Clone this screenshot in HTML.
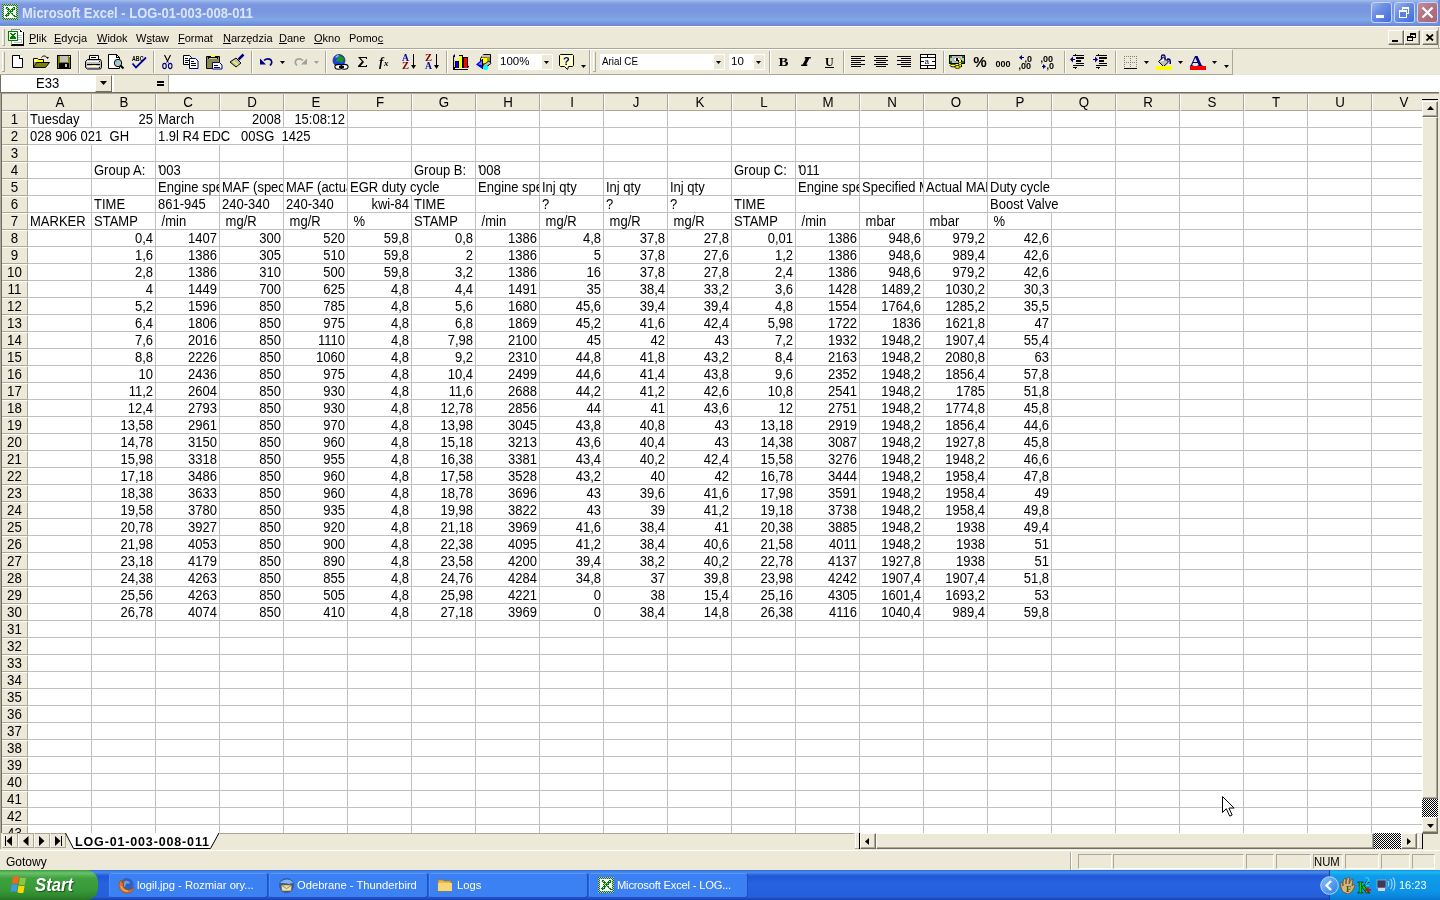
<!DOCTYPE html><html><head><meta charset="utf-8"><style>
*{box-sizing:border-box}
html,body{margin:0;padding:0}
body{width:1440px;height:900px;overflow:hidden;position:relative;background:#ECE9D8;will-change:transform;font-family:"Liberation Sans",sans-serif;color:#000}
.a{position:absolute}
.t{position:absolute;white-space:nowrap;font-size:13px;line-height:16px;transform:scaleY(1.13);transform-origin:0 12.5px}
.hd{position:absolute;font-size:13.33px;line-height:16px;text-align:center;white-space:nowrap}
.hd span{display:inline-block;transform:scaleY(1.1);transform-origin:0 12.5px}
</style></head><body>
<div class="a" style="left:0;top:0;width:1440px;height:26px;background:linear-gradient(to bottom,#9DB9EB 0px,#9DB9EB 1px,#8CA8E6 2px,#7A96DF 5px,#7A96DF 12px,#7EA0E3 17px,#80A6E6 20px,#7496DF 23px,#6D8AD8 25px,#6D8AD8 26px)"></div>
<div class="a" style="left:1438px;top:0;width:2px;height:26px;background:#6E88D6"></div>
<div class="a" style="left:0;top:26px;width:1440px;height:1px;background:#FFFFFF"></div>
<div class="a" style="left:22px;top:5px;font-size:14px;font-weight:bold;color:#DCE5F7;line-height:16px;white-space:nowrap;transform:scaleX(0.925);transform-origin:0 0">Microsoft Excel - LOG-01-003-008-011</div>
<svg class="a" style="left:2px;top:4px" width="16" height="16" viewBox="0 0 16 16" shape-rendering="crispEdges"><defs><pattern id="dith" width="2" height="2" patternUnits="userSpaceOnUse"><rect width="2" height="2" fill="#C8B8D0"/><rect width="1" height="1" fill="#008000"/><rect x="1" y="1" width="1" height="1" fill="#008000"/></pattern><pattern id="dith2" width="2" height="2" patternUnits="userSpaceOnUse"><rect width="2" height="2" fill="#008000"/><rect x="1" width="1" height="1" fill="#D0D0D0"/></pattern></defs><rect x="0" y="0" width="16" height="16" fill="url(#dith)"/><rect x="2" y="2" width="12" height="12" fill="#fff"/><path d="M3 4l2-1l3 3l3-3l3 1l-4 4.5l4 4.5h-3l-3-3l-3 3l-2-1l3-3.5z" fill="url(#dith2)"/><path d="M4 5l7.5 7.5" stroke="#fff" stroke-width="0.8" shape-rendering="geometricPrecision"/><rect x="13" y="12" width="2" height="1" fill="#008000"/></svg>
<div class="a" style="left:1371px;top:2px;width:21px;height:21px;border-radius:3px;border:1px solid #C8D6F4;background:linear-gradient(135deg,#A0B6E8 0%,#6F91E6 35%,#3F6DE0 100%)"><div class="a" style="left:4px;top:12px;width:8px;height:3px;background:#fff"></div></div>
<div class="a" style="left:1394px;top:2px;width:21px;height:21px;border-radius:3px;border:1px solid #C8D6F4;background:linear-gradient(135deg,#A0B6E8 0%,#6F91E6 35%,#3F6DE0 100%)"><div class="a" style="left:7px;top:4px;width:7px;height:7px;border:1px solid #fff;border-top-width:2px"></div><div class="a" style="left:4px;top:7px;width:8px;height:8px;border:1px solid #fff;border-top-width:2px;background:#5A82E3"></div></div>
<div class="a" style="left:1417px;top:2px;width:21px;height:21px;border-radius:3px;border:1px solid #C8D6F4;background:linear-gradient(135deg,#C48E9A 0%,#B27785 40%,#A86472 100%)"><svg class="a" style="left:3px;top:3px" width="13" height="13" viewBox="0 0 13 13"><path d="M1.5 1.5 L11.5 11.5 M11.5 1.5 L1.5 11.5" stroke="#fff" stroke-width="2.2"/></svg></div>
<div class="a" style="left:0;top:48px;width:1440px;height:1px;background:#ACA899"></div>
<div class="a" style="left:0;top:49px;width:1232px;height:1px;background:#FFFFFF"></div>
<div class="a" style="left:1438px;top:27px;width:1px;height:22px;background:#ACA899"></div>
<div class="a" style="left:2px;top:29px;width:3px;height:17px;border-left:1px solid #fff;border-right:1px solid #ACA899;border-bottom:1px solid #ACA899"></div>
<svg class="a" style="left:7px;top:29px" width="18" height="18" viewBox="0 0 18 18" shape-rendering="crispEdges"><rect x="4" y="0" width="13" height="17" fill="#000"/><rect x="4" y="0" width="12" height="15" fill="#fff"/><rect x="4" y="0" width="1" height="16" fill="#909090"/><rect x="4" y="0" width="9" height="1" fill="#909090"/><rect x="13" y="1" width="2" height="2" fill="#000"/><rect x="14" y="1" width="1" height="1" fill="#fff"/><rect x="16" y="0" width="1" height="3" fill="#ECE9D8"/><rect x="15" y="0" width="2" height="1" fill="#ECE9D8"/><rect x="11" y="6" width="4" height="1" fill="#C0C0C0"/><rect x="11" y="8" width="4" height="1" fill="#C0C0C0"/><rect x="11" y="10" width="4" height="1" fill="#C0C0C0"/><rect x="7" y="13" width="8" height="1" fill="#C0C0C0"/><rect x="14" y="11" width="1" height="3" fill="#C0C0C0"/><rect x="1" y="2" width="10" height="10" fill="#008000"/><rect x="2" y="3" width="8" height="8" fill="#fff"/><path d="M3 4h2l1 1.5l1-1.5h2l-2 2.5l2 2.5v1h-6v-1l2-2.5z" fill="#008000"/></svg>
<div class="a mn" style="left:29px;top:32px;font-size:11px;line-height:13px;white-space:nowrap"><u>P</u>lik</div>
<div class="a mn" style="left:54px;top:32px;font-size:11px;line-height:13px;white-space:nowrap"><u>E</u>dycja</div>
<div class="a mn" style="left:97px;top:32px;font-size:11px;line-height:13px;white-space:nowrap"><u>W</u>idok</div>
<div class="a mn" style="left:136px;top:32px;font-size:11px;line-height:13px;white-space:nowrap">W<u>s</u>taw</div>
<div class="a mn" style="left:178px;top:32px;font-size:11px;line-height:13px;white-space:nowrap"><u>F</u>ormat</div>
<div class="a mn" style="left:223px;top:32px;font-size:11px;line-height:13px;white-space:nowrap"><u>N</u>arzędzia</div>
<div class="a mn" style="left:279px;top:32px;font-size:11px;line-height:13px;white-space:nowrap"><u>D</u>ane</div>
<div class="a mn" style="left:314px;top:32px;font-size:11px;line-height:13px;white-space:nowrap"><u>O</u>kno</div>
<div class="a mn" style="left:349px;top:32px;font-size:11px;line-height:13px;white-space:nowrap">Pomo<u>c</u></div>
<div class="a" style="left:1388px;top:30px;width:16px;height:15px;background:#ECE9D8;border-top:1px solid #fff;border-left:1px solid #fff;border-right:1px solid #716F64;border-bottom:1px solid #716F64;box-shadow:inset -1px -1px 0 #ACA899"><div class="a" style="left:3px;top:9px;width:6px;height:2px;background:#000"></div></div>
<div class="a" style="left:1404px;top:30px;width:16px;height:15px;background:#ECE9D8;border-top:1px solid #fff;border-left:1px solid #fff;border-right:1px solid #716F64;border-bottom:1px solid #716F64;box-shadow:inset -1px -1px 0 #ACA899"><div class="a" style="left:5px;top:2px;width:6px;height:5px;border:1px solid #000;border-top-width:2px"></div><div class="a" style="left:2px;top:5px;width:6px;height:5px;border:1px solid #000;border-top-width:2px;background:#ECE9D8"></div></div>
<div class="a" style="left:1422px;top:30px;width:16px;height:15px;background:#ECE9D8;border-top:1px solid #fff;border-left:1px solid #fff;border-right:1px solid #716F64;border-bottom:1px solid #716F64;box-shadow:inset -1px -1px 0 #ACA899"><svg class="a" style="left:3px;top:3px" width="8" height="7" viewBox="0 0 8 7"><path d="M0.5 0.5 L7 6.5 M7 0.5 L0.5 6.5" stroke="#000" stroke-width="1.8"/></svg></div>
<div class="a" style="left:0;top:74px;width:1233px;height:1px;background:#ACA899"></div>
<svg class="a" style="left:0;top:50px" width="1440" height="25" viewBox="0 50 1440 25" shape-rendering="geometricPrecision"><rect x="589" y="49" width="1" height="25" fill="#ACA899"/><rect x="590" y="49" width="1" height="25" fill="#FFFFFF"/><rect x="1232" y="49" width="1" height="25" fill="#ACA899"/><rect x="2" y="52" width="1" height="19" fill="#FFFFFF"/><rect x="4" y="52" width="1" height="20" fill="#ACA899"/><rect x="2" y="71" width="3" height="1" fill="#ACA899"/><rect x="593" y="52" width="1" height="19" fill="#FFFFFF"/><rect x="595" y="52" width="1" height="20" fill="#ACA899"/><rect x="593" y="71" width="3" height="1" fill="#ACA899"/><rect x="78" y="51" width="1" height="22" fill="#ACA899"/><rect x="79" y="51" width="1" height="22" fill="#FFFFFF"/><rect x="153" y="51" width="1" height="22" fill="#ACA899"/><rect x="154" y="51" width="1" height="22" fill="#FFFFFF"/><rect x="251" y="51" width="1" height="22" fill="#ACA899"/><rect x="252" y="51" width="1" height="22" fill="#FFFFFF"/><rect x="325" y="51" width="1" height="22" fill="#ACA899"/><rect x="326" y="51" width="1" height="22" fill="#FFFFFF"/><rect x="446" y="51" width="1" height="22" fill="#ACA899"/><rect x="447" y="51" width="1" height="22" fill="#FFFFFF"/><rect x="769" y="51" width="1" height="22" fill="#ACA899"/><rect x="770" y="51" width="1" height="22" fill="#FFFFFF"/><rect x="843" y="51" width="1" height="22" fill="#ACA899"/><rect x="844" y="51" width="1" height="22" fill="#FFFFFF"/><rect x="943" y="51" width="1" height="22" fill="#ACA899"/><rect x="944" y="51" width="1" height="22" fill="#FFFFFF"/><rect x="1064" y="51" width="1" height="22" fill="#ACA899"/><rect x="1065" y="51" width="1" height="22" fill="#FFFFFF"/><rect x="1115" y="51" width="1" height="22" fill="#ACA899"/><rect x="1116" y="51" width="1" height="22" fill="#FFFFFF"/><path d="M12.5 55.5h7l3 3v9h-10z" fill="#fff" stroke="#000"/><rect x="19" y="55" width="1" height="4" fill="#000"/><rect x="19" y="58" width="4" height="1" fill="#000"/><rect x="20" y="56" width="2" height="2" fill="#fff"/><path d="M33.5 58.5h4l1 1h5v3h-9l-1 5z" fill="#FFFF00" stroke="#000"/><path d="M34 59h3v8h-3z" fill="#fff" opacity=".5"/><path d="M36.5 62.5h13l-4 5h-12z" fill="#808000" stroke="#000"/><path d="M41.5 57.5c1-2 4-2 5.5 0" fill="none" stroke="#000"/><path d="M46 57h3l-1.5 2z" fill="#000"/><rect x="57" y="55" width="14" height="14" fill="#000"/><rect x="58" y="56" width="2" height="6" fill="#808000"/><rect x="68" y="56" width="2" height="6" fill="#808000"/><rect x="60" y="56" width="8" height="6" fill="#C0C0C0"/><rect x="58" y="62" width="12" height="1" fill="#808000"/><rect x="58" y="62" width="1" height="6" fill="#808000"/><rect x="69" y="62" width="1" height="6" fill="#808000"/><rect x="65" y="64" width="2" height="3" fill="#C0C0C0"/><rect x="69" y="56" width="1" height="1" fill="#fff"/><path d="M89.5 55.5h9v4h-9z" fill="#fff" stroke="#000"/><rect x="91" y="57" width="5" height="1" fill="#000"/><path d="M87.5 59.5h13l1 2v6l-1 1.5h-13l-2-1.5v-6z" fill="#C0C0C0" stroke="#000"/><rect x="87" y="61" width="12" height="1" fill="#fff"/><rect x="87" y="64" width="13" height="1" fill="#000"/><rect x="92" y="65" width="4" height="1" fill="#FFFF00"/><rect x="87" y="66" width="12" height="1" fill="#fff"/><rect x="99" y="61" width="1" height="1" fill="#000"/><rect x="99" y="67" width="1" height="1" fill="#000"/><path d="M108.5 54.5h8l3 3v11h-11z" fill="#fff" stroke="#000"/><rect x="116" y="54" width="1" height="4" fill="#000"/><rect x="116" y="57" width="4" height="1" fill="#000"/><circle cx="118" cy="63" r="3.7" fill="#C0C0C0" stroke="#000"/><rect x="116" y="61" width="2" height="2" fill="#00FFFF"/><rect x="118" y="64" width="1" height="1" fill="#00FFFF"/><path d="M120.5 65.5l3 3" stroke="#000" stroke-width="2"/><text x="132" y="60.8" font-family="Liberation Sans" font-weight="bold" font-size="7.5" fill="#000" textLength="11.5" lengthAdjust="spacingAndGlyphs">ABC</text><path d="M132.5 63.5l3.5 4l10-10" fill="none" stroke="#0000A0" stroke-width="1.8"/><path d="M164.5 55l3.5 7 M170.5 55l-3.5 7" fill="none" stroke="#000" stroke-width="1.1"/><ellipse cx="164.5" cy="66" rx="1.8" ry="2.6" fill="none" stroke="#000080" stroke-width="1.1"/><ellipse cx="170.2" cy="66" rx="1.8" ry="2.6" fill="none" stroke="#000080" stroke-width="1.1"/><path d="M166.5 62.5l-1 1 M168.5 62.5l1 1" stroke="#000080" stroke-width="1"/><path d="M183.5 55.5h6l2 2v7h-8z" fill="#fff" stroke="#000"/><rect x="185" y="58" width="3" height="1" fill="#000"/><rect x="185" y="60" width="4" height="1" fill="#000"/><rect x="185" y="62" width="3" height="1" fill="#000"/><path d="M189.5 58.5h6l2.5 2.5v7.5h-8.5z" fill="#fff" stroke="#000080"/><rect x="191" y="61" width="3" height="1" fill="#000"/><rect x="191" y="63" width="5" height="1" fill="#000"/><rect x="191" y="65" width="5" height="1" fill="#000"/><path d="M206.5 56.5h13v12h-13z" fill="#8A8A50" stroke="#000"/><rect x="208" y="57" width="10" height="2" fill="#000"/><rect x="210" y="56" width="6" height="1" fill="#000"/><rect x="211" y="55" width="4" height="2" fill="#FFFF00"/><rect x="209" y="58" width="8" height="1" fill="#C0C0C0"/><path d="M212.5 62.5h7l2.5 2.5v4h-9.5z" fill="#fff" stroke="#000080"/><rect x="214" y="65" width="4" height="1" fill="#000080"/><rect x="214" y="67" width="6" height="1" fill="#000080"/><path d="M230 62l6-4l5 5l-5 4z" fill="#C0C0C0" stroke="#000" stroke-width="1"/><path d="M233 61l5 4" stroke="#FFFF00" stroke-width="1.5"/><path d="M238.5 59.5l5-5" stroke="#000080" stroke-width="2.5"/><rect x="229" y="68" width="1" height="1" fill="#FFFF00"/><rect x="231" y="68" width="1" height="1" fill="#FFFF00"/><rect x="233" y="68" width="1" height="1" fill="#FFFF00"/><rect x="235" y="67" width="1" height="1" fill="#FFFF00"/><path d="M264 60.5c2-2 6.5-2.5 7.5 0.5c0.8 2-0.5 3.5-1.5 4.5" fill="none" stroke="#000080" stroke-width="1.6"/><path d="M260 58.5v6h6z" fill="#000080"/><path d="M280 61h5l-2.5 3z" fill="#000"/><path d="M303 60.5c-2-2-6.5-2.5-7.5 0.5c-0.8 2 0.5 3.5 1.5 4.5" fill="none" stroke="#A0A0A0" stroke-width="1.6"/><path d="M307 58.5v6h-6z" fill="#A0A0A0"/><path d="M314 61h5l-2.5 3z" fill="#A0A0A0"/><circle cx="339" cy="60.5" r="6" fill="#1E3CF0" stroke="#303030" stroke-width="0.8"/><path d="M335 57.5c1-2 3-2.5 4-2.5c0 2-2 3-4 2.5z" fill="#80C0FF"/><path d="M339 56c2 0 4 1 5 3c-1 1-1 3-2 3.5c-2 0-2-1-3-1.5c-1 1-3 1-3-1c1-1 2-1 3-4z" fill="#10A010"/><ellipse cx="338.5" cy="66.8" rx="3.6" ry="2.4" fill="#fff" stroke="#000" stroke-width="1.1"/><ellipse cx="344.5" cy="66.8" rx="3.6" ry="2.4" fill="#fff" stroke="#000" stroke-width="1.1"/><rect x="339" y="66" width="5" height="2" fill="#000"/><path d="M358 57h9v2h-1v-1h-5.5l3.5 4l-3.5 4h5.5v-1h1v2h-9v-1l4-4.5l-4-4.5z" fill="#000"/><text x="379" y="66" font-family="Liberation Serif" font-style="italic" font-weight="bold" font-size="13" fill="#000">f</text><text x="384" y="66" font-family="Liberation Serif" font-style="italic" font-weight="bold" font-size="9" fill="#000">x</text><text x="402" y="60.9" font-family="Liberation Serif" font-weight="bold" font-size="9.5" fill="#0000A0" textLength="7" lengthAdjust="spacingAndGlyphs">A</text><text x="402" y="68.9" font-family="Liberation Serif" font-weight="bold" font-size="9.5" fill="#800000" textLength="7" lengthAdjust="spacingAndGlyphs">Z</text><rect x="413" y="54" width="1" height="12" fill="#000"/><path d="M411 65h5l-2.5 4z" fill="#000"/><text x="425" y="60.9" font-family="Liberation Serif" font-weight="bold" font-size="9.5" fill="#800000" textLength="7" lengthAdjust="spacingAndGlyphs">Z</text><text x="425" y="68.9" font-family="Liberation Serif" font-weight="bold" font-size="9.5" fill="#0000A0" textLength="7" lengthAdjust="spacingAndGlyphs">A</text><rect x="436" y="54" width="1" height="12" fill="#000"/><path d="M434 65h5l-2.5 4z" fill="#000"/><path d="M453 56l2-2v15h-2z" fill="#000"/><rect x="454" y="57" width="1" height="10" fill="#D0D0D0"/><rect x="455" y="68" width="11" height="1" fill="#fff"/><rect x="453" y="69" width="15" height="1" fill="#000"/><path d="M466 68h2l1-1.5v-1z" fill="#000"/><rect x="455" y="61" width="4" height="7" fill="#000"/><rect x="456" y="62" width="2" height="6" fill="#0000FF"/><rect x="459" y="55" width="4" height="13" fill="#000"/><rect x="459" y="56" width="3" height="12" fill="#FFFF00"/><rect x="463" y="57" width="5" height="11" fill="#000"/><rect x="464" y="58" width="3" height="10" fill="#FF0000"/><path d="M480.5 58.5l3-4h7v9l-3 3h-7z" fill="#808000" stroke="#000" stroke-width="1"/><rect x="482" y="55" width="8" height="2" fill="#C0C0C0"/><rect x="481" y="58" width="6" height="5" fill="#FFFF00"/><rect x="487" y="57" width="3" height="6" fill="#A0A000"/><path d="M476 64.5l6.5-5.5v10z" fill="#0000FF"/><path d="M478 64.5l4-3.5v4z" fill="#fff" opacity=".5"/><rect x="482" y="59" width="1" height="10" fill="#000"/><path d="M483 65l6-4l2 2.5l-6 4z" fill="#C0C0C0" stroke="#000" stroke-width=".8"/><circle cx="485.5" cy="67.5" r="2.6" fill="#00FFFF"/><rect x="498" y="54" width="55" height="16" fill="#fff"/><rect x="542" y="55" width="10" height="14" fill="#ECE9D8"/><path d="M544 61h5l-2.5 3z" fill="#000"/><text x="500" y="64.8" font-family="Liberation Sans" font-size="11.5" fill="#000">100%</text><path d="M560.5 54.5h12l1 1v10l-1 1h-4l-1 3l-3-3h-4l-1-1v-10z" fill="#FFFFC0" stroke="#000"/><text x="563" y="64.5" font-family="Liberation Sans" font-weight="bold" font-size="11" fill="#000080">?</text><path d="M581 65h5l-2.5 3z" fill="#000"/><rect x="600" y="54" width="125" height="16" fill="#fff"/><rect x="714" y="55" width="10" height="14" fill="#ECE9D8"/><path d="M716 61h5l-2.5 3z" fill="#000"/><text x="602" y="64.8" font-family="Liberation Sans" font-size="11.5" fill="#000" textLength="36" lengthAdjust="spacingAndGlyphs">Arial CE</text><rect x="729" y="54" width="36" height="16" fill="#fff"/><rect x="754" y="55" width="10" height="14" fill="#ECE9D8"/><path d="M756 61h5l-2.5 3z" fill="#000"/><text x="731" y="64.8" font-family="Liberation Sans" font-size="11.5" fill="#000">10</text><text x="778.6" y="65.9" font-family="Liberation Serif" font-weight="bold" font-size="13.5" fill="#000" textLength="10" lengthAdjust="spacingAndGlyphs">B</text><path d="M805 57H811L810.6 58.6H809.3L806.2 64.4H807.5L807.1 66H801L801.4 64.4H802.7L805.8 58.6H804.6Z" fill="#000"/><text x="825" y="66" font-family="Liberation Serif" font-weight="bold" font-size="12" fill="#000">U</text><rect x="825" y="67" width="9" height="1" fill="#000"/><rect x="851" y="56" width="14" height="1" fill="#000"/><rect x="851" y="58" width="10" height="1" fill="#000"/><rect x="851" y="60" width="14" height="1" fill="#000"/><rect x="851" y="62" width="10" height="1" fill="#000"/><rect x="851" y="64" width="14" height="1" fill="#000"/><rect x="851" y="66" width="10" height="1" fill="#000"/><rect x="874" y="56" width="14" height="1" fill="#000"/><rect x="876" y="58" width="10" height="1" fill="#000"/><rect x="874" y="60" width="14" height="1" fill="#000"/><rect x="876" y="62" width="10" height="1" fill="#000"/><rect x="874" y="64" width="14" height="1" fill="#000"/><rect x="876" y="66" width="10" height="1" fill="#000"/><rect x="897" y="56" width="14" height="1" fill="#000"/><rect x="901" y="58" width="10" height="1" fill="#000"/><rect x="897" y="60" width="14" height="1" fill="#000"/><rect x="901" y="62" width="10" height="1" fill="#000"/><rect x="897" y="64" width="14" height="1" fill="#000"/><rect x="901" y="66" width="10" height="1" fill="#000"/><rect x="920" y="54" width="16" height="15" fill="#000"/><rect x="921" y="55" width="6" height="2" fill="#fff"/><rect x="928" y="55" width="7" height="2" fill="#fff"/><rect x="921" y="58" width="14" height="7" fill="#fff"/><rect x="921" y="66" width="6" height="2" fill="#fff"/><rect x="928" y="66" width="7" height="2" fill="#fff"/><text x="924.5" y="64" font-family="Liberation Sans" font-size="8" fill="#000">a</text><rect x="921" y="61" width="3" height="1" fill="#000"/><rect x="932" y="61" width="3" height="1" fill="#000"/><rect x="949" y="55" width="16" height="9" fill="#000"/><rect x="950" y="56" width="14" height="7" fill="#C0C0C0"/><rect x="950" y="56" width="2" height="2" fill="#008000"/><rect x="962" y="56" width="2" height="2" fill="#008000"/><rect x="950" y="61" width="2" height="2" fill="#008000"/><rect x="962" y="61" width="2" height="2" fill="#008000"/><ellipse cx="957" cy="59.5" rx="3.5" ry="2.5" fill="#fff" stroke="#808080" stroke-width=".8"/><rect x="956" y="58" width="2" height="3" fill="#000"/><rect x="958" y="60" width="4" height="7" fill="#FFFF00"/><rect x="958" y="60" width="1" height="7" fill="#000"/><rect x="961" y="60" width="1" height="7" fill="#000"/><rect x="958" y="62" width="4" height="1" fill="#808000"/><rect x="958" y="64" width="4" height="1" fill="#808000"/><ellipse cx="953" cy="65.5" rx="2.8" ry="1.4" fill="#FFFF00" stroke="#000" stroke-width="0.9"/><ellipse cx="957.5" cy="67" rx="2.8" ry="1.4" fill="#FFFF00" stroke="#000" stroke-width="0.9"/><text x="973.3" y="67.3" font-family="Liberation Sans" font-weight="bold" font-size="14" fill="#000" textLength="13.5" lengthAdjust="spacingAndGlyphs">%</text><text x="995.5" y="67.3" font-family="Liberation Sans" font-weight="bold" font-size="8.6" fill="#000" textLength="15" lengthAdjust="spacingAndGlyphs">000</text><path d="M1019 57.5l3-2.5v5z" fill="#000080"/><rect x="1021" y="57" width="3" height="1" fill="#000080"/><text x="1024.5" y="61.8" font-family="Liberation Sans" font-weight="bold" font-size="9" fill="#000">,0</text><text x="1018.5" y="68.8" font-family="Liberation Sans" font-weight="bold" font-size="9" fill="#000">,00</text><text x="1040.5" y="61.8" font-family="Liberation Sans" font-weight="bold" font-size="9" fill="#000">,00</text><path d="M1046 66.5l-3-2.5v5z" fill="#000080"/><rect x="1042" y="66" width="2" height="1" fill="#000080"/><text x="1046.5" y="68.8" font-family="Liberation Sans" font-weight="bold" font-size="9" fill="#000">,0</text><rect x="1075" y="54" width="1" height="1" fill="#000"/><rect x="1075" y="68" width="1" height="1" fill="#000"/><rect x="1073" y="55" width="11" height="1" fill="#000"/><rect x="1076" y="57" width="8" height="2" fill="#000"/><rect x="1076" y="60" width="5" height="2" fill="#000"/><rect x="1076" y="63" width="8" height="1" fill="#000"/><rect x="1073" y="65" width="11" height="1" fill="#000"/><rect x="1073" y="67" width="4" height="1" fill="#000"/><path d="M1070 59.5l3-3v6z" fill="#000080"/><rect x="1072" y="59" width="3" height="1" fill="#000080"/><rect x="1098" y="54" width="1" height="1" fill="#000"/><rect x="1098" y="68" width="1" height="1" fill="#000"/><rect x="1096" y="55" width="11" height="1" fill="#000"/><rect x="1099" y="57" width="8" height="2" fill="#000"/><rect x="1099" y="60" width="5" height="2" fill="#000"/><rect x="1099" y="63" width="8" height="1" fill="#000"/><rect x="1096" y="65" width="11" height="1" fill="#000"/><rect x="1096" y="67" width="4" height="1" fill="#000"/><path d="M1098 59.5l-3-3v6z" fill="#000080"/><rect x="1093" y="59" width="3" height="1" fill="#000080"/><rect x="1124" y="56" width="1" height="1" fill="#808080"/><rect x="1126" y="56" width="1" height="1" fill="#808080"/><rect x="1128" y="56" width="1" height="1" fill="#808080"/><rect x="1130" y="56" width="1" height="1" fill="#808080"/><rect x="1132" y="56" width="1" height="1" fill="#808080"/><rect x="1134" y="56" width="1" height="1" fill="#808080"/><rect x="1136" y="56" width="1" height="1" fill="#808080"/><rect x="1124" y="58" width="1" height="1" fill="#808080"/><rect x="1130" y="58" width="1" height="1" fill="#808080"/><rect x="1136" y="58" width="1" height="1" fill="#808080"/><rect x="1124" y="60" width="1" height="1" fill="#808080"/><rect x="1130" y="60" width="1" height="1" fill="#808080"/><rect x="1136" y="60" width="1" height="1" fill="#808080"/><rect x="1124" y="62" width="1" height="1" fill="#808080"/><rect x="1126" y="62" width="1" height="1" fill="#808080"/><rect x="1128" y="62" width="1" height="1" fill="#808080"/><rect x="1130" y="62" width="1" height="1" fill="#808080"/><rect x="1132" y="62" width="1" height="1" fill="#808080"/><rect x="1134" y="62" width="1" height="1" fill="#808080"/><rect x="1136" y="62" width="1" height="1" fill="#808080"/><rect x="1124" y="64" width="1" height="1" fill="#808080"/><rect x="1130" y="64" width="1" height="1" fill="#808080"/><rect x="1136" y="64" width="1" height="1" fill="#808080"/><rect x="1124" y="66" width="1" height="1" fill="#808080"/><rect x="1130" y="66" width="1" height="1" fill="#808080"/><rect x="1136" y="66" width="1" height="1" fill="#808080"/><rect x="1124" y="68" width="13" height="1" fill="#000"/><path d="M1144 61h5l-2.5 3z" fill="#000"/><path d="M1158.5 61.5l5-4.5l5 5l-5 4.5z" fill="#C0C0C0" stroke="#000" stroke-width="1"/><path d="M1160 61.5l3.5-3l2 2z" fill="#fff"/><path d="M1161.5 59.5v-3c0-2 3.5-2 3.5 0v4" fill="none" stroke="#000080" stroke-width="1.3"/><path d="M1167 58.5c2-1 4 0 4 3v2.5h-1.5v-2.5c0-1-1-1.5-2.5-1z" fill="#000080"/><rect x="1156" y="66" width="16" height="4" fill="#FFFF00"/><path d="M1178 61h5l-2.5 3z" fill="#000"/><text x="1189.8" y="65.6" font-family="Liberation Serif" font-weight="bold" font-size="15" fill="#000080" textLength="13" lengthAdjust="spacingAndGlyphs">A</text><rect x="1190" y="66" width="16" height="4" fill="#FF0000"/><path d="M1212 61h5l-2.5 3z" fill="#000"/><path d="M1224 65h5l-2.5 3z" fill="#000"/></svg>
<div class="a" style="left:0;top:75px;width:1440px;height:17px;background:#fff"></div>
<div class="a" style="left:0;top:75px;width:1px;height:17px;background:#716F64"></div>
<div class="a t" style="left:36px;top:76px;font-size:13px">E33</div>
<div class="a" style="left:95px;top:75px;width:17px;height:17px;background:#ECE9D8;border-right:1px solid #716F64;border-bottom:1px solid #716F64;border-left:1px solid #fff;border-top:1px solid #fff"><svg class="a" style="left:4px;top:5px" width="7" height="4"><path d="M0 0H7L3.5 4Z" fill="#000"/></svg></div>
<div class="a" style="left:114px;top:75px;width:55px;height:17px;background:#ECE9D8;border-right:1px solid #ACA899"></div>
<div class="a" style="left:157px;top:81px;width:7px;border-top:2px solid #000;border-bottom:2px solid #000;height:5px"></div>
<div class="a" style="left:0;top:92px;width:1439px;height:1px;background:#716F64"></div>
<div class="a" style="left:0;top:93px;width:1439px;height:1px;background:#ACA899"></div>
<div class="a" style="left:0;top:93px;width:1px;height:740px;background:#ACA899"></div>
<div class="a" style="left:1px;top:93px;width:1px;height:740px;background:#716F64"></div>
<div class="a" style="left:28px;top:111px;width:1394px;height:722px;background-color:#fff;background-image:linear-gradient(to right,transparent 63px,#C0C0C0 63px),linear-gradient(to bottom,transparent 16px,#C0C0C0 16px);background-size:64px 17px,64px 17px"></div>
<div class="a" style="left:2px;top:94px;width:1420px;height:17px;background:#ECE9D8;border-bottom:1px solid #ACA899"></div>
<div class="a" style="left:2px;top:94px;width:26px;height:17px;border-right:1px solid #ACA899;border-bottom:1px solid #ACA899"></div>
<div class="a hd" style="left:28px;top:94px;width:64px;height:17px;border-left:1px solid #fff;border-right:1px solid #ACA899;border-bottom:1px solid #ACA899;padding-top:1px"><span>A</span></div>
<div class="a hd" style="left:92px;top:94px;width:64px;height:17px;border-left:1px solid #fff;border-right:1px solid #ACA899;border-bottom:1px solid #ACA899;padding-top:1px"><span>B</span></div>
<div class="a hd" style="left:156px;top:94px;width:64px;height:17px;border-left:1px solid #fff;border-right:1px solid #ACA899;border-bottom:1px solid #ACA899;padding-top:1px"><span>C</span></div>
<div class="a hd" style="left:220px;top:94px;width:64px;height:17px;border-left:1px solid #fff;border-right:1px solid #ACA899;border-bottom:1px solid #ACA899;padding-top:1px"><span>D</span></div>
<div class="a hd" style="left:284px;top:94px;width:64px;height:17px;border-left:1px solid #fff;border-right:1px solid #ACA899;border-bottom:1px solid #ACA899;padding-top:1px"><span>E</span></div>
<div class="a hd" style="left:348px;top:94px;width:64px;height:17px;border-left:1px solid #fff;border-right:1px solid #ACA899;border-bottom:1px solid #ACA899;padding-top:1px"><span>F</span></div>
<div class="a hd" style="left:412px;top:94px;width:64px;height:17px;border-left:1px solid #fff;border-right:1px solid #ACA899;border-bottom:1px solid #ACA899;padding-top:1px"><span>G</span></div>
<div class="a hd" style="left:476px;top:94px;width:64px;height:17px;border-left:1px solid #fff;border-right:1px solid #ACA899;border-bottom:1px solid #ACA899;padding-top:1px"><span>H</span></div>
<div class="a hd" style="left:540px;top:94px;width:64px;height:17px;border-left:1px solid #fff;border-right:1px solid #ACA899;border-bottom:1px solid #ACA899;padding-top:1px"><span>I</span></div>
<div class="a hd" style="left:604px;top:94px;width:64px;height:17px;border-left:1px solid #fff;border-right:1px solid #ACA899;border-bottom:1px solid #ACA899;padding-top:1px"><span>J</span></div>
<div class="a hd" style="left:668px;top:94px;width:64px;height:17px;border-left:1px solid #fff;border-right:1px solid #ACA899;border-bottom:1px solid #ACA899;padding-top:1px"><span>K</span></div>
<div class="a hd" style="left:732px;top:94px;width:64px;height:17px;border-left:1px solid #fff;border-right:1px solid #ACA899;border-bottom:1px solid #ACA899;padding-top:1px"><span>L</span></div>
<div class="a hd" style="left:796px;top:94px;width:64px;height:17px;border-left:1px solid #fff;border-right:1px solid #ACA899;border-bottom:1px solid #ACA899;padding-top:1px"><span>M</span></div>
<div class="a hd" style="left:860px;top:94px;width:64px;height:17px;border-left:1px solid #fff;border-right:1px solid #ACA899;border-bottom:1px solid #ACA899;padding-top:1px"><span>N</span></div>
<div class="a hd" style="left:924px;top:94px;width:64px;height:17px;border-left:1px solid #fff;border-right:1px solid #ACA899;border-bottom:1px solid #ACA899;padding-top:1px"><span>O</span></div>
<div class="a hd" style="left:988px;top:94px;width:64px;height:17px;border-left:1px solid #fff;border-right:1px solid #ACA899;border-bottom:1px solid #ACA899;padding-top:1px"><span>P</span></div>
<div class="a hd" style="left:1052px;top:94px;width:64px;height:17px;border-left:1px solid #fff;border-right:1px solid #ACA899;border-bottom:1px solid #ACA899;padding-top:1px"><span>Q</span></div>
<div class="a hd" style="left:1116px;top:94px;width:64px;height:17px;border-left:1px solid #fff;border-right:1px solid #ACA899;border-bottom:1px solid #ACA899;padding-top:1px"><span>R</span></div>
<div class="a hd" style="left:1180px;top:94px;width:64px;height:17px;border-left:1px solid #fff;border-right:1px solid #ACA899;border-bottom:1px solid #ACA899;padding-top:1px"><span>S</span></div>
<div class="a hd" style="left:1244px;top:94px;width:64px;height:17px;border-left:1px solid #fff;border-right:1px solid #ACA899;border-bottom:1px solid #ACA899;padding-top:1px"><span>T</span></div>
<div class="a hd" style="left:1308px;top:94px;width:64px;height:17px;border-left:1px solid #fff;border-right:1px solid #ACA899;border-bottom:1px solid #ACA899;padding-top:1px"><span>U</span></div>
<div class="a hd" style="left:1372px;top:94px;width:64px;height:17px;border-left:1px solid #fff;border-right:1px solid #ACA899;border-bottom:1px solid #ACA899;padding-top:1px"><span>V</span></div>
<div class="a" style="left:2px;top:111px;width:26px;height:722px;background:#ECE9D8;border-right:1px solid #ACA899"></div>
<div class="a hd" style="left:2px;top:111px;width:26px;height:17px;border-top:1px solid #fff;border-bottom:1px solid #ACA899;border-right:1px solid #ACA899"><span>1</span></div>
<div class="a hd" style="left:2px;top:128px;width:26px;height:17px;border-top:1px solid #fff;border-bottom:1px solid #ACA899;border-right:1px solid #ACA899"><span>2</span></div>
<div class="a hd" style="left:2px;top:145px;width:26px;height:17px;border-top:1px solid #fff;border-bottom:1px solid #ACA899;border-right:1px solid #ACA899"><span>3</span></div>
<div class="a hd" style="left:2px;top:162px;width:26px;height:17px;border-top:1px solid #fff;border-bottom:1px solid #ACA899;border-right:1px solid #ACA899"><span>4</span></div>
<div class="a hd" style="left:2px;top:179px;width:26px;height:17px;border-top:1px solid #fff;border-bottom:1px solid #ACA899;border-right:1px solid #ACA899"><span>5</span></div>
<div class="a hd" style="left:2px;top:196px;width:26px;height:17px;border-top:1px solid #fff;border-bottom:1px solid #ACA899;border-right:1px solid #ACA899"><span>6</span></div>
<div class="a hd" style="left:2px;top:213px;width:26px;height:17px;border-top:1px solid #fff;border-bottom:1px solid #ACA899;border-right:1px solid #ACA899"><span>7</span></div>
<div class="a hd" style="left:2px;top:230px;width:26px;height:17px;border-top:1px solid #fff;border-bottom:1px solid #ACA899;border-right:1px solid #ACA899"><span>8</span></div>
<div class="a hd" style="left:2px;top:247px;width:26px;height:17px;border-top:1px solid #fff;border-bottom:1px solid #ACA899;border-right:1px solid #ACA899"><span>9</span></div>
<div class="a hd" style="left:2px;top:264px;width:26px;height:17px;border-top:1px solid #fff;border-bottom:1px solid #ACA899;border-right:1px solid #ACA899"><span>10</span></div>
<div class="a hd" style="left:2px;top:281px;width:26px;height:17px;border-top:1px solid #fff;border-bottom:1px solid #ACA899;border-right:1px solid #ACA899"><span>11</span></div>
<div class="a hd" style="left:2px;top:298px;width:26px;height:17px;border-top:1px solid #fff;border-bottom:1px solid #ACA899;border-right:1px solid #ACA899"><span>12</span></div>
<div class="a hd" style="left:2px;top:315px;width:26px;height:17px;border-top:1px solid #fff;border-bottom:1px solid #ACA899;border-right:1px solid #ACA899"><span>13</span></div>
<div class="a hd" style="left:2px;top:332px;width:26px;height:17px;border-top:1px solid #fff;border-bottom:1px solid #ACA899;border-right:1px solid #ACA899"><span>14</span></div>
<div class="a hd" style="left:2px;top:349px;width:26px;height:17px;border-top:1px solid #fff;border-bottom:1px solid #ACA899;border-right:1px solid #ACA899"><span>15</span></div>
<div class="a hd" style="left:2px;top:366px;width:26px;height:17px;border-top:1px solid #fff;border-bottom:1px solid #ACA899;border-right:1px solid #ACA899"><span>16</span></div>
<div class="a hd" style="left:2px;top:383px;width:26px;height:17px;border-top:1px solid #fff;border-bottom:1px solid #ACA899;border-right:1px solid #ACA899"><span>17</span></div>
<div class="a hd" style="left:2px;top:400px;width:26px;height:17px;border-top:1px solid #fff;border-bottom:1px solid #ACA899;border-right:1px solid #ACA899"><span>18</span></div>
<div class="a hd" style="left:2px;top:417px;width:26px;height:17px;border-top:1px solid #fff;border-bottom:1px solid #ACA899;border-right:1px solid #ACA899"><span>19</span></div>
<div class="a hd" style="left:2px;top:434px;width:26px;height:17px;border-top:1px solid #fff;border-bottom:1px solid #ACA899;border-right:1px solid #ACA899"><span>20</span></div>
<div class="a hd" style="left:2px;top:451px;width:26px;height:17px;border-top:1px solid #fff;border-bottom:1px solid #ACA899;border-right:1px solid #ACA899"><span>21</span></div>
<div class="a hd" style="left:2px;top:468px;width:26px;height:17px;border-top:1px solid #fff;border-bottom:1px solid #ACA899;border-right:1px solid #ACA899"><span>22</span></div>
<div class="a hd" style="left:2px;top:485px;width:26px;height:17px;border-top:1px solid #fff;border-bottom:1px solid #ACA899;border-right:1px solid #ACA899"><span>23</span></div>
<div class="a hd" style="left:2px;top:502px;width:26px;height:17px;border-top:1px solid #fff;border-bottom:1px solid #ACA899;border-right:1px solid #ACA899"><span>24</span></div>
<div class="a hd" style="left:2px;top:519px;width:26px;height:17px;border-top:1px solid #fff;border-bottom:1px solid #ACA899;border-right:1px solid #ACA899"><span>25</span></div>
<div class="a hd" style="left:2px;top:536px;width:26px;height:17px;border-top:1px solid #fff;border-bottom:1px solid #ACA899;border-right:1px solid #ACA899"><span>26</span></div>
<div class="a hd" style="left:2px;top:553px;width:26px;height:17px;border-top:1px solid #fff;border-bottom:1px solid #ACA899;border-right:1px solid #ACA899"><span>27</span></div>
<div class="a hd" style="left:2px;top:570px;width:26px;height:17px;border-top:1px solid #fff;border-bottom:1px solid #ACA899;border-right:1px solid #ACA899"><span>28</span></div>
<div class="a hd" style="left:2px;top:587px;width:26px;height:17px;border-top:1px solid #fff;border-bottom:1px solid #ACA899;border-right:1px solid #ACA899"><span>29</span></div>
<div class="a hd" style="left:2px;top:604px;width:26px;height:17px;border-top:1px solid #fff;border-bottom:1px solid #ACA899;border-right:1px solid #ACA899"><span>30</span></div>
<div class="a hd" style="left:2px;top:621px;width:26px;height:17px;border-top:1px solid #fff;border-bottom:1px solid #ACA899;border-right:1px solid #ACA899"><span>31</span></div>
<div class="a hd" style="left:2px;top:638px;width:26px;height:17px;border-top:1px solid #fff;border-bottom:1px solid #ACA899;border-right:1px solid #ACA899"><span>32</span></div>
<div class="a hd" style="left:2px;top:655px;width:26px;height:17px;border-top:1px solid #fff;border-bottom:1px solid #ACA899;border-right:1px solid #ACA899"><span>33</span></div>
<div class="a hd" style="left:2px;top:672px;width:26px;height:17px;border-top:1px solid #fff;border-bottom:1px solid #ACA899;border-right:1px solid #ACA899"><span>34</span></div>
<div class="a hd" style="left:2px;top:689px;width:26px;height:17px;border-top:1px solid #fff;border-bottom:1px solid #ACA899;border-right:1px solid #ACA899"><span>35</span></div>
<div class="a hd" style="left:2px;top:706px;width:26px;height:17px;border-top:1px solid #fff;border-bottom:1px solid #ACA899;border-right:1px solid #ACA899"><span>36</span></div>
<div class="a hd" style="left:2px;top:723px;width:26px;height:17px;border-top:1px solid #fff;border-bottom:1px solid #ACA899;border-right:1px solid #ACA899"><span>37</span></div>
<div class="a hd" style="left:2px;top:740px;width:26px;height:17px;border-top:1px solid #fff;border-bottom:1px solid #ACA899;border-right:1px solid #ACA899"><span>38</span></div>
<div class="a hd" style="left:2px;top:757px;width:26px;height:17px;border-top:1px solid #fff;border-bottom:1px solid #ACA899;border-right:1px solid #ACA899"><span>39</span></div>
<div class="a hd" style="left:2px;top:774px;width:26px;height:17px;border-top:1px solid #fff;border-bottom:1px solid #ACA899;border-right:1px solid #ACA899"><span>40</span></div>
<div class="a hd" style="left:2px;top:791px;width:26px;height:17px;border-top:1px solid #fff;border-bottom:1px solid #ACA899;border-right:1px solid #ACA899"><span>41</span></div>
<div class="a hd" style="left:2px;top:808px;width:26px;height:17px;border-top:1px solid #fff;border-bottom:1px solid #ACA899;border-right:1px solid #ACA899"><span>42</span></div>
<div class="a hd" style="left:2px;top:825px;width:26px;height:17px;border-top:1px solid #fff;border-bottom:1px solid #ACA899;border-right:1px solid #ACA899"><span>43</span></div>
<div class="t" style="left:30px;top:112px;width:61px;overflow:hidden;">Tuesday</div>
<div class="t" style="left:92px;top:112px;width:63px;text-align:right;padding-right:2px;overflow:hidden">25</div>
<div class="t" style="left:158px;top:112px;width:61px;overflow:hidden;">March</div>
<div class="t" style="left:220px;top:112px;width:63px;text-align:right;padding-right:2px;overflow:hidden">2008</div>
<div class="t" style="left:284px;top:112px;width:63px;text-align:right;padding-right:2px;overflow:hidden">15:08:12</div>
<div class="a" style="left:91px;top:128px;width:1px;height:16px;background:#fff"></div>
<div class="t" style="left:30px;top:129px;width:125px;overflow:hidden;">028 906 021&nbsp; GH</div>
<div class="a" style="left:219px;top:128px;width:1px;height:16px;background:#fff"></div>
<div class="a" style="left:283px;top:128px;width:1px;height:16px;background:#fff"></div>
<div class="t" style="left:158px;top:129px;width:189px;overflow:hidden;">1.9l R4 EDC&nbsp;&nbsp; 00SG&nbsp; 1425</div>
<div class="t" style="left:94px;top:163px;width:61px;overflow:hidden;">Group A:</div>
<div class="t" style="left:158px;top:163px;width:61px;overflow:hidden;"><span style='letter-spacing:-1.5px'>'</span>003</div>
<div class="t" style="left:414px;top:163px;width:61px;overflow:hidden;">Group B:</div>
<div class="t" style="left:478px;top:163px;width:61px;overflow:hidden;"><span style='letter-spacing:-1.5px'>'</span>008</div>
<div class="t" style="left:734px;top:163px;width:61px;overflow:hidden;">Group C:</div>
<div class="t" style="left:798px;top:163px;width:61px;overflow:hidden;"><span style='letter-spacing:-1.5px'>'</span>011</div>
<div class="t" style="left:158px;top:180px;width:61px;overflow:hidden;">Engine speed</div>
<div class="t" style="left:222px;top:180px;width:61px;overflow:hidden;">MAF (specified)</div>
<div class="t" style="left:286px;top:180px;width:61px;overflow:hidden;">MAF (actual)</div>
<div class="a" style="left:411px;top:179px;width:1px;height:16px;background:#fff"></div>
<div class="t" style="left:350px;top:180px;width:125px;overflow:hidden;">EGR duty cycle</div>
<div class="t" style="left:478px;top:180px;width:61px;overflow:hidden;">Engine speed</div>
<div class="t" style="left:542px;top:180px;width:61px;overflow:hidden;">Inj qty</div>
<div class="t" style="left:606px;top:180px;width:61px;overflow:hidden;">Inj qty</div>
<div class="t" style="left:670px;top:180px;width:61px;overflow:hidden;">Inj qty</div>
<div class="t" style="left:798px;top:180px;width:61px;overflow:hidden;">Engine speed</div>
<div class="t" style="left:862px;top:180px;width:61px;overflow:hidden;">Specified MAP</div>
<div class="t" style="left:926px;top:180px;width:61px;overflow:hidden;">Actual MAP</div>
<div class="a" style="left:1051px;top:179px;width:1px;height:16px;background:#fff"></div>
<div class="t" style="left:990px;top:180px;width:125px;overflow:hidden;">Duty cycle</div>
<div class="t" style="left:94px;top:197px;width:61px;overflow:hidden;">TIME</div>
<div class="t" style="left:158px;top:197px;width:61px;overflow:hidden;">861-945</div>
<div class="t" style="left:222px;top:197px;width:61px;overflow:hidden;">240-340</div>
<div class="t" style="left:286px;top:197px;width:61px;overflow:hidden;">240-340</div>
<div class="t" style="left:348px;top:197px;width:63px;text-align:right;padding-right:2px;overflow:hidden">kwi-84</div>
<div class="t" style="left:414px;top:197px;width:61px;overflow:hidden;">TIME</div>
<div class="t" style="left:542px;top:197px;width:61px;overflow:hidden;">?</div>
<div class="t" style="left:606px;top:197px;width:61px;overflow:hidden;">?</div>
<div class="t" style="left:670px;top:197px;width:61px;overflow:hidden;">?</div>
<div class="t" style="left:734px;top:197px;width:61px;overflow:hidden;">TIME</div>
<div class="a" style="left:1051px;top:196px;width:1px;height:16px;background:#fff"></div>
<div class="t" style="left:990px;top:197px;width:125px;overflow:hidden;">Boost Valve</div>
<div class="t" style="left:30px;top:214px;width:61px;overflow:hidden;">MARKER</div>
<div class="t" style="left:94px;top:214px;width:61px;overflow:hidden;">STAMP</div>
<div class="t" style="left:158px;top:214px;width:61px;overflow:hidden;">&nbsp;/min</div>
<div class="t" style="left:222px;top:214px;width:61px;overflow:hidden;">&nbsp;mg/R</div>
<div class="t" style="left:286px;top:214px;width:61px;overflow:hidden;">&nbsp;mg/R</div>
<div class="t" style="left:350px;top:214px;width:61px;overflow:hidden;">&nbsp;%</div>
<div class="t" style="left:414px;top:214px;width:61px;overflow:hidden;">STAMP</div>
<div class="t" style="left:478px;top:214px;width:61px;overflow:hidden;">&nbsp;/min</div>
<div class="t" style="left:542px;top:214px;width:61px;overflow:hidden;">&nbsp;mg/R</div>
<div class="t" style="left:606px;top:214px;width:61px;overflow:hidden;">&nbsp;mg/R</div>
<div class="t" style="left:670px;top:214px;width:61px;overflow:hidden;">&nbsp;mg/R</div>
<div class="t" style="left:734px;top:214px;width:61px;overflow:hidden;">STAMP</div>
<div class="t" style="left:798px;top:214px;width:61px;overflow:hidden;">&nbsp;/min</div>
<div class="t" style="left:862px;top:214px;width:61px;overflow:hidden;">&nbsp;mbar</div>
<div class="t" style="left:926px;top:214px;width:61px;overflow:hidden;">&nbsp;mbar</div>
<div class="t" style="left:990px;top:214px;width:61px;overflow:hidden;">&nbsp;%</div>
<div class="t" style="left:92px;top:231px;width:63px;text-align:right;padding-right:2px;overflow:hidden">0,4</div>
<div class="t" style="left:156px;top:231px;width:63px;text-align:right;padding-right:2px;overflow:hidden">1407</div>
<div class="t" style="left:220px;top:231px;width:63px;text-align:right;padding-right:2px;overflow:hidden">300</div>
<div class="t" style="left:284px;top:231px;width:63px;text-align:right;padding-right:2px;overflow:hidden">520</div>
<div class="t" style="left:348px;top:231px;width:63px;text-align:right;padding-right:2px;overflow:hidden">59,8</div>
<div class="t" style="left:412px;top:231px;width:63px;text-align:right;padding-right:2px;overflow:hidden">0,8</div>
<div class="t" style="left:476px;top:231px;width:63px;text-align:right;padding-right:2px;overflow:hidden">1386</div>
<div class="t" style="left:540px;top:231px;width:63px;text-align:right;padding-right:2px;overflow:hidden">4,8</div>
<div class="t" style="left:604px;top:231px;width:63px;text-align:right;padding-right:2px;overflow:hidden">37,8</div>
<div class="t" style="left:668px;top:231px;width:63px;text-align:right;padding-right:2px;overflow:hidden">27,8</div>
<div class="t" style="left:732px;top:231px;width:63px;text-align:right;padding-right:2px;overflow:hidden">0,01</div>
<div class="t" style="left:796px;top:231px;width:63px;text-align:right;padding-right:2px;overflow:hidden">1386</div>
<div class="t" style="left:860px;top:231px;width:63px;text-align:right;padding-right:2px;overflow:hidden">948,6</div>
<div class="t" style="left:924px;top:231px;width:63px;text-align:right;padding-right:2px;overflow:hidden">979,2</div>
<div class="t" style="left:988px;top:231px;width:63px;text-align:right;padding-right:2px;overflow:hidden">42,6</div>
<div class="t" style="left:92px;top:248px;width:63px;text-align:right;padding-right:2px;overflow:hidden">1,6</div>
<div class="t" style="left:156px;top:248px;width:63px;text-align:right;padding-right:2px;overflow:hidden">1386</div>
<div class="t" style="left:220px;top:248px;width:63px;text-align:right;padding-right:2px;overflow:hidden">305</div>
<div class="t" style="left:284px;top:248px;width:63px;text-align:right;padding-right:2px;overflow:hidden">510</div>
<div class="t" style="left:348px;top:248px;width:63px;text-align:right;padding-right:2px;overflow:hidden">59,8</div>
<div class="t" style="left:412px;top:248px;width:63px;text-align:right;padding-right:2px;overflow:hidden">2</div>
<div class="t" style="left:476px;top:248px;width:63px;text-align:right;padding-right:2px;overflow:hidden">1386</div>
<div class="t" style="left:540px;top:248px;width:63px;text-align:right;padding-right:2px;overflow:hidden">5</div>
<div class="t" style="left:604px;top:248px;width:63px;text-align:right;padding-right:2px;overflow:hidden">37,8</div>
<div class="t" style="left:668px;top:248px;width:63px;text-align:right;padding-right:2px;overflow:hidden">27,6</div>
<div class="t" style="left:732px;top:248px;width:63px;text-align:right;padding-right:2px;overflow:hidden">1,2</div>
<div class="t" style="left:796px;top:248px;width:63px;text-align:right;padding-right:2px;overflow:hidden">1386</div>
<div class="t" style="left:860px;top:248px;width:63px;text-align:right;padding-right:2px;overflow:hidden">948,6</div>
<div class="t" style="left:924px;top:248px;width:63px;text-align:right;padding-right:2px;overflow:hidden">989,4</div>
<div class="t" style="left:988px;top:248px;width:63px;text-align:right;padding-right:2px;overflow:hidden">42,6</div>
<div class="t" style="left:92px;top:265px;width:63px;text-align:right;padding-right:2px;overflow:hidden">2,8</div>
<div class="t" style="left:156px;top:265px;width:63px;text-align:right;padding-right:2px;overflow:hidden">1386</div>
<div class="t" style="left:220px;top:265px;width:63px;text-align:right;padding-right:2px;overflow:hidden">310</div>
<div class="t" style="left:284px;top:265px;width:63px;text-align:right;padding-right:2px;overflow:hidden">500</div>
<div class="t" style="left:348px;top:265px;width:63px;text-align:right;padding-right:2px;overflow:hidden">59,8</div>
<div class="t" style="left:412px;top:265px;width:63px;text-align:right;padding-right:2px;overflow:hidden">3,2</div>
<div class="t" style="left:476px;top:265px;width:63px;text-align:right;padding-right:2px;overflow:hidden">1386</div>
<div class="t" style="left:540px;top:265px;width:63px;text-align:right;padding-right:2px;overflow:hidden">16</div>
<div class="t" style="left:604px;top:265px;width:63px;text-align:right;padding-right:2px;overflow:hidden">37,8</div>
<div class="t" style="left:668px;top:265px;width:63px;text-align:right;padding-right:2px;overflow:hidden">27,8</div>
<div class="t" style="left:732px;top:265px;width:63px;text-align:right;padding-right:2px;overflow:hidden">2,4</div>
<div class="t" style="left:796px;top:265px;width:63px;text-align:right;padding-right:2px;overflow:hidden">1386</div>
<div class="t" style="left:860px;top:265px;width:63px;text-align:right;padding-right:2px;overflow:hidden">948,6</div>
<div class="t" style="left:924px;top:265px;width:63px;text-align:right;padding-right:2px;overflow:hidden">979,2</div>
<div class="t" style="left:988px;top:265px;width:63px;text-align:right;padding-right:2px;overflow:hidden">42,6</div>
<div class="t" style="left:92px;top:282px;width:63px;text-align:right;padding-right:2px;overflow:hidden">4</div>
<div class="t" style="left:156px;top:282px;width:63px;text-align:right;padding-right:2px;overflow:hidden">1449</div>
<div class="t" style="left:220px;top:282px;width:63px;text-align:right;padding-right:2px;overflow:hidden">700</div>
<div class="t" style="left:284px;top:282px;width:63px;text-align:right;padding-right:2px;overflow:hidden">625</div>
<div class="t" style="left:348px;top:282px;width:63px;text-align:right;padding-right:2px;overflow:hidden">4,8</div>
<div class="t" style="left:412px;top:282px;width:63px;text-align:right;padding-right:2px;overflow:hidden">4,4</div>
<div class="t" style="left:476px;top:282px;width:63px;text-align:right;padding-right:2px;overflow:hidden">1491</div>
<div class="t" style="left:540px;top:282px;width:63px;text-align:right;padding-right:2px;overflow:hidden">35</div>
<div class="t" style="left:604px;top:282px;width:63px;text-align:right;padding-right:2px;overflow:hidden">38,4</div>
<div class="t" style="left:668px;top:282px;width:63px;text-align:right;padding-right:2px;overflow:hidden">33,2</div>
<div class="t" style="left:732px;top:282px;width:63px;text-align:right;padding-right:2px;overflow:hidden">3,6</div>
<div class="t" style="left:796px;top:282px;width:63px;text-align:right;padding-right:2px;overflow:hidden">1428</div>
<div class="t" style="left:860px;top:282px;width:63px;text-align:right;padding-right:2px;overflow:hidden">1489,2</div>
<div class="t" style="left:924px;top:282px;width:63px;text-align:right;padding-right:2px;overflow:hidden">1030,2</div>
<div class="t" style="left:988px;top:282px;width:63px;text-align:right;padding-right:2px;overflow:hidden">30,3</div>
<div class="t" style="left:92px;top:299px;width:63px;text-align:right;padding-right:2px;overflow:hidden">5,2</div>
<div class="t" style="left:156px;top:299px;width:63px;text-align:right;padding-right:2px;overflow:hidden">1596</div>
<div class="t" style="left:220px;top:299px;width:63px;text-align:right;padding-right:2px;overflow:hidden">850</div>
<div class="t" style="left:284px;top:299px;width:63px;text-align:right;padding-right:2px;overflow:hidden">785</div>
<div class="t" style="left:348px;top:299px;width:63px;text-align:right;padding-right:2px;overflow:hidden">4,8</div>
<div class="t" style="left:412px;top:299px;width:63px;text-align:right;padding-right:2px;overflow:hidden">5,6</div>
<div class="t" style="left:476px;top:299px;width:63px;text-align:right;padding-right:2px;overflow:hidden">1680</div>
<div class="t" style="left:540px;top:299px;width:63px;text-align:right;padding-right:2px;overflow:hidden">45,6</div>
<div class="t" style="left:604px;top:299px;width:63px;text-align:right;padding-right:2px;overflow:hidden">39,4</div>
<div class="t" style="left:668px;top:299px;width:63px;text-align:right;padding-right:2px;overflow:hidden">39,4</div>
<div class="t" style="left:732px;top:299px;width:63px;text-align:right;padding-right:2px;overflow:hidden">4,8</div>
<div class="t" style="left:796px;top:299px;width:63px;text-align:right;padding-right:2px;overflow:hidden">1554</div>
<div class="t" style="left:860px;top:299px;width:63px;text-align:right;padding-right:2px;overflow:hidden">1764,6</div>
<div class="t" style="left:924px;top:299px;width:63px;text-align:right;padding-right:2px;overflow:hidden">1285,2</div>
<div class="t" style="left:988px;top:299px;width:63px;text-align:right;padding-right:2px;overflow:hidden">35,5</div>
<div class="t" style="left:92px;top:316px;width:63px;text-align:right;padding-right:2px;overflow:hidden">6,4</div>
<div class="t" style="left:156px;top:316px;width:63px;text-align:right;padding-right:2px;overflow:hidden">1806</div>
<div class="t" style="left:220px;top:316px;width:63px;text-align:right;padding-right:2px;overflow:hidden">850</div>
<div class="t" style="left:284px;top:316px;width:63px;text-align:right;padding-right:2px;overflow:hidden">975</div>
<div class="t" style="left:348px;top:316px;width:63px;text-align:right;padding-right:2px;overflow:hidden">4,8</div>
<div class="t" style="left:412px;top:316px;width:63px;text-align:right;padding-right:2px;overflow:hidden">6,8</div>
<div class="t" style="left:476px;top:316px;width:63px;text-align:right;padding-right:2px;overflow:hidden">1869</div>
<div class="t" style="left:540px;top:316px;width:63px;text-align:right;padding-right:2px;overflow:hidden">45,2</div>
<div class="t" style="left:604px;top:316px;width:63px;text-align:right;padding-right:2px;overflow:hidden">41,6</div>
<div class="t" style="left:668px;top:316px;width:63px;text-align:right;padding-right:2px;overflow:hidden">42,4</div>
<div class="t" style="left:732px;top:316px;width:63px;text-align:right;padding-right:2px;overflow:hidden">5,98</div>
<div class="t" style="left:796px;top:316px;width:63px;text-align:right;padding-right:2px;overflow:hidden">1722</div>
<div class="t" style="left:860px;top:316px;width:63px;text-align:right;padding-right:2px;overflow:hidden">1836</div>
<div class="t" style="left:924px;top:316px;width:63px;text-align:right;padding-right:2px;overflow:hidden">1621,8</div>
<div class="t" style="left:988px;top:316px;width:63px;text-align:right;padding-right:2px;overflow:hidden">47</div>
<div class="t" style="left:92px;top:333px;width:63px;text-align:right;padding-right:2px;overflow:hidden">7,6</div>
<div class="t" style="left:156px;top:333px;width:63px;text-align:right;padding-right:2px;overflow:hidden">2016</div>
<div class="t" style="left:220px;top:333px;width:63px;text-align:right;padding-right:2px;overflow:hidden">850</div>
<div class="t" style="left:284px;top:333px;width:63px;text-align:right;padding-right:2px;overflow:hidden">1110</div>
<div class="t" style="left:348px;top:333px;width:63px;text-align:right;padding-right:2px;overflow:hidden">4,8</div>
<div class="t" style="left:412px;top:333px;width:63px;text-align:right;padding-right:2px;overflow:hidden">7,98</div>
<div class="t" style="left:476px;top:333px;width:63px;text-align:right;padding-right:2px;overflow:hidden">2100</div>
<div class="t" style="left:540px;top:333px;width:63px;text-align:right;padding-right:2px;overflow:hidden">45</div>
<div class="t" style="left:604px;top:333px;width:63px;text-align:right;padding-right:2px;overflow:hidden">42</div>
<div class="t" style="left:668px;top:333px;width:63px;text-align:right;padding-right:2px;overflow:hidden">43</div>
<div class="t" style="left:732px;top:333px;width:63px;text-align:right;padding-right:2px;overflow:hidden">7,2</div>
<div class="t" style="left:796px;top:333px;width:63px;text-align:right;padding-right:2px;overflow:hidden">1932</div>
<div class="t" style="left:860px;top:333px;width:63px;text-align:right;padding-right:2px;overflow:hidden">1948,2</div>
<div class="t" style="left:924px;top:333px;width:63px;text-align:right;padding-right:2px;overflow:hidden">1907,4</div>
<div class="t" style="left:988px;top:333px;width:63px;text-align:right;padding-right:2px;overflow:hidden">55,4</div>
<div class="t" style="left:92px;top:350px;width:63px;text-align:right;padding-right:2px;overflow:hidden">8,8</div>
<div class="t" style="left:156px;top:350px;width:63px;text-align:right;padding-right:2px;overflow:hidden">2226</div>
<div class="t" style="left:220px;top:350px;width:63px;text-align:right;padding-right:2px;overflow:hidden">850</div>
<div class="t" style="left:284px;top:350px;width:63px;text-align:right;padding-right:2px;overflow:hidden">1060</div>
<div class="t" style="left:348px;top:350px;width:63px;text-align:right;padding-right:2px;overflow:hidden">4,8</div>
<div class="t" style="left:412px;top:350px;width:63px;text-align:right;padding-right:2px;overflow:hidden">9,2</div>
<div class="t" style="left:476px;top:350px;width:63px;text-align:right;padding-right:2px;overflow:hidden">2310</div>
<div class="t" style="left:540px;top:350px;width:63px;text-align:right;padding-right:2px;overflow:hidden">44,8</div>
<div class="t" style="left:604px;top:350px;width:63px;text-align:right;padding-right:2px;overflow:hidden">41,8</div>
<div class="t" style="left:668px;top:350px;width:63px;text-align:right;padding-right:2px;overflow:hidden">43,2</div>
<div class="t" style="left:732px;top:350px;width:63px;text-align:right;padding-right:2px;overflow:hidden">8,4</div>
<div class="t" style="left:796px;top:350px;width:63px;text-align:right;padding-right:2px;overflow:hidden">2163</div>
<div class="t" style="left:860px;top:350px;width:63px;text-align:right;padding-right:2px;overflow:hidden">1948,2</div>
<div class="t" style="left:924px;top:350px;width:63px;text-align:right;padding-right:2px;overflow:hidden">2080,8</div>
<div class="t" style="left:988px;top:350px;width:63px;text-align:right;padding-right:2px;overflow:hidden">63</div>
<div class="t" style="left:92px;top:367px;width:63px;text-align:right;padding-right:2px;overflow:hidden">10</div>
<div class="t" style="left:156px;top:367px;width:63px;text-align:right;padding-right:2px;overflow:hidden">2436</div>
<div class="t" style="left:220px;top:367px;width:63px;text-align:right;padding-right:2px;overflow:hidden">850</div>
<div class="t" style="left:284px;top:367px;width:63px;text-align:right;padding-right:2px;overflow:hidden">975</div>
<div class="t" style="left:348px;top:367px;width:63px;text-align:right;padding-right:2px;overflow:hidden">4,8</div>
<div class="t" style="left:412px;top:367px;width:63px;text-align:right;padding-right:2px;overflow:hidden">10,4</div>
<div class="t" style="left:476px;top:367px;width:63px;text-align:right;padding-right:2px;overflow:hidden">2499</div>
<div class="t" style="left:540px;top:367px;width:63px;text-align:right;padding-right:2px;overflow:hidden">44,6</div>
<div class="t" style="left:604px;top:367px;width:63px;text-align:right;padding-right:2px;overflow:hidden">41,4</div>
<div class="t" style="left:668px;top:367px;width:63px;text-align:right;padding-right:2px;overflow:hidden">43,8</div>
<div class="t" style="left:732px;top:367px;width:63px;text-align:right;padding-right:2px;overflow:hidden">9,6</div>
<div class="t" style="left:796px;top:367px;width:63px;text-align:right;padding-right:2px;overflow:hidden">2352</div>
<div class="t" style="left:860px;top:367px;width:63px;text-align:right;padding-right:2px;overflow:hidden">1948,2</div>
<div class="t" style="left:924px;top:367px;width:63px;text-align:right;padding-right:2px;overflow:hidden">1856,4</div>
<div class="t" style="left:988px;top:367px;width:63px;text-align:right;padding-right:2px;overflow:hidden">57,8</div>
<div class="t" style="left:92px;top:384px;width:63px;text-align:right;padding-right:2px;overflow:hidden">11,2</div>
<div class="t" style="left:156px;top:384px;width:63px;text-align:right;padding-right:2px;overflow:hidden">2604</div>
<div class="t" style="left:220px;top:384px;width:63px;text-align:right;padding-right:2px;overflow:hidden">850</div>
<div class="t" style="left:284px;top:384px;width:63px;text-align:right;padding-right:2px;overflow:hidden">930</div>
<div class="t" style="left:348px;top:384px;width:63px;text-align:right;padding-right:2px;overflow:hidden">4,8</div>
<div class="t" style="left:412px;top:384px;width:63px;text-align:right;padding-right:2px;overflow:hidden">11,6</div>
<div class="t" style="left:476px;top:384px;width:63px;text-align:right;padding-right:2px;overflow:hidden">2688</div>
<div class="t" style="left:540px;top:384px;width:63px;text-align:right;padding-right:2px;overflow:hidden">44,2</div>
<div class="t" style="left:604px;top:384px;width:63px;text-align:right;padding-right:2px;overflow:hidden">41,2</div>
<div class="t" style="left:668px;top:384px;width:63px;text-align:right;padding-right:2px;overflow:hidden">42,6</div>
<div class="t" style="left:732px;top:384px;width:63px;text-align:right;padding-right:2px;overflow:hidden">10,8</div>
<div class="t" style="left:796px;top:384px;width:63px;text-align:right;padding-right:2px;overflow:hidden">2541</div>
<div class="t" style="left:860px;top:384px;width:63px;text-align:right;padding-right:2px;overflow:hidden">1948,2</div>
<div class="t" style="left:924px;top:384px;width:63px;text-align:right;padding-right:2px;overflow:hidden">1785</div>
<div class="t" style="left:988px;top:384px;width:63px;text-align:right;padding-right:2px;overflow:hidden">51,8</div>
<div class="t" style="left:92px;top:401px;width:63px;text-align:right;padding-right:2px;overflow:hidden">12,4</div>
<div class="t" style="left:156px;top:401px;width:63px;text-align:right;padding-right:2px;overflow:hidden">2793</div>
<div class="t" style="left:220px;top:401px;width:63px;text-align:right;padding-right:2px;overflow:hidden">850</div>
<div class="t" style="left:284px;top:401px;width:63px;text-align:right;padding-right:2px;overflow:hidden">930</div>
<div class="t" style="left:348px;top:401px;width:63px;text-align:right;padding-right:2px;overflow:hidden">4,8</div>
<div class="t" style="left:412px;top:401px;width:63px;text-align:right;padding-right:2px;overflow:hidden">12,78</div>
<div class="t" style="left:476px;top:401px;width:63px;text-align:right;padding-right:2px;overflow:hidden">2856</div>
<div class="t" style="left:540px;top:401px;width:63px;text-align:right;padding-right:2px;overflow:hidden">44</div>
<div class="t" style="left:604px;top:401px;width:63px;text-align:right;padding-right:2px;overflow:hidden">41</div>
<div class="t" style="left:668px;top:401px;width:63px;text-align:right;padding-right:2px;overflow:hidden">43,6</div>
<div class="t" style="left:732px;top:401px;width:63px;text-align:right;padding-right:2px;overflow:hidden">12</div>
<div class="t" style="left:796px;top:401px;width:63px;text-align:right;padding-right:2px;overflow:hidden">2751</div>
<div class="t" style="left:860px;top:401px;width:63px;text-align:right;padding-right:2px;overflow:hidden">1948,2</div>
<div class="t" style="left:924px;top:401px;width:63px;text-align:right;padding-right:2px;overflow:hidden">1774,8</div>
<div class="t" style="left:988px;top:401px;width:63px;text-align:right;padding-right:2px;overflow:hidden">45,8</div>
<div class="t" style="left:92px;top:418px;width:63px;text-align:right;padding-right:2px;overflow:hidden">13,58</div>
<div class="t" style="left:156px;top:418px;width:63px;text-align:right;padding-right:2px;overflow:hidden">2961</div>
<div class="t" style="left:220px;top:418px;width:63px;text-align:right;padding-right:2px;overflow:hidden">850</div>
<div class="t" style="left:284px;top:418px;width:63px;text-align:right;padding-right:2px;overflow:hidden">970</div>
<div class="t" style="left:348px;top:418px;width:63px;text-align:right;padding-right:2px;overflow:hidden">4,8</div>
<div class="t" style="left:412px;top:418px;width:63px;text-align:right;padding-right:2px;overflow:hidden">13,98</div>
<div class="t" style="left:476px;top:418px;width:63px;text-align:right;padding-right:2px;overflow:hidden">3045</div>
<div class="t" style="left:540px;top:418px;width:63px;text-align:right;padding-right:2px;overflow:hidden">43,8</div>
<div class="t" style="left:604px;top:418px;width:63px;text-align:right;padding-right:2px;overflow:hidden">40,8</div>
<div class="t" style="left:668px;top:418px;width:63px;text-align:right;padding-right:2px;overflow:hidden">43</div>
<div class="t" style="left:732px;top:418px;width:63px;text-align:right;padding-right:2px;overflow:hidden">13,18</div>
<div class="t" style="left:796px;top:418px;width:63px;text-align:right;padding-right:2px;overflow:hidden">2919</div>
<div class="t" style="left:860px;top:418px;width:63px;text-align:right;padding-right:2px;overflow:hidden">1948,2</div>
<div class="t" style="left:924px;top:418px;width:63px;text-align:right;padding-right:2px;overflow:hidden">1856,4</div>
<div class="t" style="left:988px;top:418px;width:63px;text-align:right;padding-right:2px;overflow:hidden">44,6</div>
<div class="t" style="left:92px;top:435px;width:63px;text-align:right;padding-right:2px;overflow:hidden">14,78</div>
<div class="t" style="left:156px;top:435px;width:63px;text-align:right;padding-right:2px;overflow:hidden">3150</div>
<div class="t" style="left:220px;top:435px;width:63px;text-align:right;padding-right:2px;overflow:hidden">850</div>
<div class="t" style="left:284px;top:435px;width:63px;text-align:right;padding-right:2px;overflow:hidden">960</div>
<div class="t" style="left:348px;top:435px;width:63px;text-align:right;padding-right:2px;overflow:hidden">4,8</div>
<div class="t" style="left:412px;top:435px;width:63px;text-align:right;padding-right:2px;overflow:hidden">15,18</div>
<div class="t" style="left:476px;top:435px;width:63px;text-align:right;padding-right:2px;overflow:hidden">3213</div>
<div class="t" style="left:540px;top:435px;width:63px;text-align:right;padding-right:2px;overflow:hidden">43,6</div>
<div class="t" style="left:604px;top:435px;width:63px;text-align:right;padding-right:2px;overflow:hidden">40,4</div>
<div class="t" style="left:668px;top:435px;width:63px;text-align:right;padding-right:2px;overflow:hidden">43</div>
<div class="t" style="left:732px;top:435px;width:63px;text-align:right;padding-right:2px;overflow:hidden">14,38</div>
<div class="t" style="left:796px;top:435px;width:63px;text-align:right;padding-right:2px;overflow:hidden">3087</div>
<div class="t" style="left:860px;top:435px;width:63px;text-align:right;padding-right:2px;overflow:hidden">1948,2</div>
<div class="t" style="left:924px;top:435px;width:63px;text-align:right;padding-right:2px;overflow:hidden">1927,8</div>
<div class="t" style="left:988px;top:435px;width:63px;text-align:right;padding-right:2px;overflow:hidden">45,8</div>
<div class="t" style="left:92px;top:452px;width:63px;text-align:right;padding-right:2px;overflow:hidden">15,98</div>
<div class="t" style="left:156px;top:452px;width:63px;text-align:right;padding-right:2px;overflow:hidden">3318</div>
<div class="t" style="left:220px;top:452px;width:63px;text-align:right;padding-right:2px;overflow:hidden">850</div>
<div class="t" style="left:284px;top:452px;width:63px;text-align:right;padding-right:2px;overflow:hidden">955</div>
<div class="t" style="left:348px;top:452px;width:63px;text-align:right;padding-right:2px;overflow:hidden">4,8</div>
<div class="t" style="left:412px;top:452px;width:63px;text-align:right;padding-right:2px;overflow:hidden">16,38</div>
<div class="t" style="left:476px;top:452px;width:63px;text-align:right;padding-right:2px;overflow:hidden">3381</div>
<div class="t" style="left:540px;top:452px;width:63px;text-align:right;padding-right:2px;overflow:hidden">43,4</div>
<div class="t" style="left:604px;top:452px;width:63px;text-align:right;padding-right:2px;overflow:hidden">40,2</div>
<div class="t" style="left:668px;top:452px;width:63px;text-align:right;padding-right:2px;overflow:hidden">42,4</div>
<div class="t" style="left:732px;top:452px;width:63px;text-align:right;padding-right:2px;overflow:hidden">15,58</div>
<div class="t" style="left:796px;top:452px;width:63px;text-align:right;padding-right:2px;overflow:hidden">3276</div>
<div class="t" style="left:860px;top:452px;width:63px;text-align:right;padding-right:2px;overflow:hidden">1948,2</div>
<div class="t" style="left:924px;top:452px;width:63px;text-align:right;padding-right:2px;overflow:hidden">1948,2</div>
<div class="t" style="left:988px;top:452px;width:63px;text-align:right;padding-right:2px;overflow:hidden">46,6</div>
<div class="t" style="left:92px;top:469px;width:63px;text-align:right;padding-right:2px;overflow:hidden">17,18</div>
<div class="t" style="left:156px;top:469px;width:63px;text-align:right;padding-right:2px;overflow:hidden">3486</div>
<div class="t" style="left:220px;top:469px;width:63px;text-align:right;padding-right:2px;overflow:hidden">850</div>
<div class="t" style="left:284px;top:469px;width:63px;text-align:right;padding-right:2px;overflow:hidden">960</div>
<div class="t" style="left:348px;top:469px;width:63px;text-align:right;padding-right:2px;overflow:hidden">4,8</div>
<div class="t" style="left:412px;top:469px;width:63px;text-align:right;padding-right:2px;overflow:hidden">17,58</div>
<div class="t" style="left:476px;top:469px;width:63px;text-align:right;padding-right:2px;overflow:hidden">3528</div>
<div class="t" style="left:540px;top:469px;width:63px;text-align:right;padding-right:2px;overflow:hidden">43,2</div>
<div class="t" style="left:604px;top:469px;width:63px;text-align:right;padding-right:2px;overflow:hidden">40</div>
<div class="t" style="left:668px;top:469px;width:63px;text-align:right;padding-right:2px;overflow:hidden">42</div>
<div class="t" style="left:732px;top:469px;width:63px;text-align:right;padding-right:2px;overflow:hidden">16,78</div>
<div class="t" style="left:796px;top:469px;width:63px;text-align:right;padding-right:2px;overflow:hidden">3444</div>
<div class="t" style="left:860px;top:469px;width:63px;text-align:right;padding-right:2px;overflow:hidden">1948,2</div>
<div class="t" style="left:924px;top:469px;width:63px;text-align:right;padding-right:2px;overflow:hidden">1958,4</div>
<div class="t" style="left:988px;top:469px;width:63px;text-align:right;padding-right:2px;overflow:hidden">47,8</div>
<div class="t" style="left:92px;top:486px;width:63px;text-align:right;padding-right:2px;overflow:hidden">18,38</div>
<div class="t" style="left:156px;top:486px;width:63px;text-align:right;padding-right:2px;overflow:hidden">3633</div>
<div class="t" style="left:220px;top:486px;width:63px;text-align:right;padding-right:2px;overflow:hidden">850</div>
<div class="t" style="left:284px;top:486px;width:63px;text-align:right;padding-right:2px;overflow:hidden">960</div>
<div class="t" style="left:348px;top:486px;width:63px;text-align:right;padding-right:2px;overflow:hidden">4,8</div>
<div class="t" style="left:412px;top:486px;width:63px;text-align:right;padding-right:2px;overflow:hidden">18,78</div>
<div class="t" style="left:476px;top:486px;width:63px;text-align:right;padding-right:2px;overflow:hidden">3696</div>
<div class="t" style="left:540px;top:486px;width:63px;text-align:right;padding-right:2px;overflow:hidden">43</div>
<div class="t" style="left:604px;top:486px;width:63px;text-align:right;padding-right:2px;overflow:hidden">39,6</div>
<div class="t" style="left:668px;top:486px;width:63px;text-align:right;padding-right:2px;overflow:hidden">41,6</div>
<div class="t" style="left:732px;top:486px;width:63px;text-align:right;padding-right:2px;overflow:hidden">17,98</div>
<div class="t" style="left:796px;top:486px;width:63px;text-align:right;padding-right:2px;overflow:hidden">3591</div>
<div class="t" style="left:860px;top:486px;width:63px;text-align:right;padding-right:2px;overflow:hidden">1948,2</div>
<div class="t" style="left:924px;top:486px;width:63px;text-align:right;padding-right:2px;overflow:hidden">1958,4</div>
<div class="t" style="left:988px;top:486px;width:63px;text-align:right;padding-right:2px;overflow:hidden">49</div>
<div class="t" style="left:92px;top:503px;width:63px;text-align:right;padding-right:2px;overflow:hidden">19,58</div>
<div class="t" style="left:156px;top:503px;width:63px;text-align:right;padding-right:2px;overflow:hidden">3780</div>
<div class="t" style="left:220px;top:503px;width:63px;text-align:right;padding-right:2px;overflow:hidden">850</div>
<div class="t" style="left:284px;top:503px;width:63px;text-align:right;padding-right:2px;overflow:hidden">935</div>
<div class="t" style="left:348px;top:503px;width:63px;text-align:right;padding-right:2px;overflow:hidden">4,8</div>
<div class="t" style="left:412px;top:503px;width:63px;text-align:right;padding-right:2px;overflow:hidden">19,98</div>
<div class="t" style="left:476px;top:503px;width:63px;text-align:right;padding-right:2px;overflow:hidden">3822</div>
<div class="t" style="left:540px;top:503px;width:63px;text-align:right;padding-right:2px;overflow:hidden">43</div>
<div class="t" style="left:604px;top:503px;width:63px;text-align:right;padding-right:2px;overflow:hidden">39</div>
<div class="t" style="left:668px;top:503px;width:63px;text-align:right;padding-right:2px;overflow:hidden">41,2</div>
<div class="t" style="left:732px;top:503px;width:63px;text-align:right;padding-right:2px;overflow:hidden">19,18</div>
<div class="t" style="left:796px;top:503px;width:63px;text-align:right;padding-right:2px;overflow:hidden">3738</div>
<div class="t" style="left:860px;top:503px;width:63px;text-align:right;padding-right:2px;overflow:hidden">1948,2</div>
<div class="t" style="left:924px;top:503px;width:63px;text-align:right;padding-right:2px;overflow:hidden">1958,4</div>
<div class="t" style="left:988px;top:503px;width:63px;text-align:right;padding-right:2px;overflow:hidden">49,8</div>
<div class="t" style="left:92px;top:520px;width:63px;text-align:right;padding-right:2px;overflow:hidden">20,78</div>
<div class="t" style="left:156px;top:520px;width:63px;text-align:right;padding-right:2px;overflow:hidden">3927</div>
<div class="t" style="left:220px;top:520px;width:63px;text-align:right;padding-right:2px;overflow:hidden">850</div>
<div class="t" style="left:284px;top:520px;width:63px;text-align:right;padding-right:2px;overflow:hidden">920</div>
<div class="t" style="left:348px;top:520px;width:63px;text-align:right;padding-right:2px;overflow:hidden">4,8</div>
<div class="t" style="left:412px;top:520px;width:63px;text-align:right;padding-right:2px;overflow:hidden">21,18</div>
<div class="t" style="left:476px;top:520px;width:63px;text-align:right;padding-right:2px;overflow:hidden">3969</div>
<div class="t" style="left:540px;top:520px;width:63px;text-align:right;padding-right:2px;overflow:hidden">41,6</div>
<div class="t" style="left:604px;top:520px;width:63px;text-align:right;padding-right:2px;overflow:hidden">38,4</div>
<div class="t" style="left:668px;top:520px;width:63px;text-align:right;padding-right:2px;overflow:hidden">41</div>
<div class="t" style="left:732px;top:520px;width:63px;text-align:right;padding-right:2px;overflow:hidden">20,38</div>
<div class="t" style="left:796px;top:520px;width:63px;text-align:right;padding-right:2px;overflow:hidden">3885</div>
<div class="t" style="left:860px;top:520px;width:63px;text-align:right;padding-right:2px;overflow:hidden">1948,2</div>
<div class="t" style="left:924px;top:520px;width:63px;text-align:right;padding-right:2px;overflow:hidden">1938</div>
<div class="t" style="left:988px;top:520px;width:63px;text-align:right;padding-right:2px;overflow:hidden">49,4</div>
<div class="t" style="left:92px;top:537px;width:63px;text-align:right;padding-right:2px;overflow:hidden">21,98</div>
<div class="t" style="left:156px;top:537px;width:63px;text-align:right;padding-right:2px;overflow:hidden">4053</div>
<div class="t" style="left:220px;top:537px;width:63px;text-align:right;padding-right:2px;overflow:hidden">850</div>
<div class="t" style="left:284px;top:537px;width:63px;text-align:right;padding-right:2px;overflow:hidden">900</div>
<div class="t" style="left:348px;top:537px;width:63px;text-align:right;padding-right:2px;overflow:hidden">4,8</div>
<div class="t" style="left:412px;top:537px;width:63px;text-align:right;padding-right:2px;overflow:hidden">22,38</div>
<div class="t" style="left:476px;top:537px;width:63px;text-align:right;padding-right:2px;overflow:hidden">4095</div>
<div class="t" style="left:540px;top:537px;width:63px;text-align:right;padding-right:2px;overflow:hidden">41,2</div>
<div class="t" style="left:604px;top:537px;width:63px;text-align:right;padding-right:2px;overflow:hidden">38,4</div>
<div class="t" style="left:668px;top:537px;width:63px;text-align:right;padding-right:2px;overflow:hidden">40,6</div>
<div class="t" style="left:732px;top:537px;width:63px;text-align:right;padding-right:2px;overflow:hidden">21,58</div>
<div class="t" style="left:796px;top:537px;width:63px;text-align:right;padding-right:2px;overflow:hidden">4011</div>
<div class="t" style="left:860px;top:537px;width:63px;text-align:right;padding-right:2px;overflow:hidden">1948,2</div>
<div class="t" style="left:924px;top:537px;width:63px;text-align:right;padding-right:2px;overflow:hidden">1938</div>
<div class="t" style="left:988px;top:537px;width:63px;text-align:right;padding-right:2px;overflow:hidden">51</div>
<div class="t" style="left:92px;top:554px;width:63px;text-align:right;padding-right:2px;overflow:hidden">23,18</div>
<div class="t" style="left:156px;top:554px;width:63px;text-align:right;padding-right:2px;overflow:hidden">4179</div>
<div class="t" style="left:220px;top:554px;width:63px;text-align:right;padding-right:2px;overflow:hidden">850</div>
<div class="t" style="left:284px;top:554px;width:63px;text-align:right;padding-right:2px;overflow:hidden">890</div>
<div class="t" style="left:348px;top:554px;width:63px;text-align:right;padding-right:2px;overflow:hidden">4,8</div>
<div class="t" style="left:412px;top:554px;width:63px;text-align:right;padding-right:2px;overflow:hidden">23,58</div>
<div class="t" style="left:476px;top:554px;width:63px;text-align:right;padding-right:2px;overflow:hidden">4200</div>
<div class="t" style="left:540px;top:554px;width:63px;text-align:right;padding-right:2px;overflow:hidden">39,4</div>
<div class="t" style="left:604px;top:554px;width:63px;text-align:right;padding-right:2px;overflow:hidden">38,2</div>
<div class="t" style="left:668px;top:554px;width:63px;text-align:right;padding-right:2px;overflow:hidden">40,2</div>
<div class="t" style="left:732px;top:554px;width:63px;text-align:right;padding-right:2px;overflow:hidden">22,78</div>
<div class="t" style="left:796px;top:554px;width:63px;text-align:right;padding-right:2px;overflow:hidden">4137</div>
<div class="t" style="left:860px;top:554px;width:63px;text-align:right;padding-right:2px;overflow:hidden">1927,8</div>
<div class="t" style="left:924px;top:554px;width:63px;text-align:right;padding-right:2px;overflow:hidden">1938</div>
<div class="t" style="left:988px;top:554px;width:63px;text-align:right;padding-right:2px;overflow:hidden">51</div>
<div class="t" style="left:92px;top:571px;width:63px;text-align:right;padding-right:2px;overflow:hidden">24,38</div>
<div class="t" style="left:156px;top:571px;width:63px;text-align:right;padding-right:2px;overflow:hidden">4263</div>
<div class="t" style="left:220px;top:571px;width:63px;text-align:right;padding-right:2px;overflow:hidden">850</div>
<div class="t" style="left:284px;top:571px;width:63px;text-align:right;padding-right:2px;overflow:hidden">855</div>
<div class="t" style="left:348px;top:571px;width:63px;text-align:right;padding-right:2px;overflow:hidden">4,8</div>
<div class="t" style="left:412px;top:571px;width:63px;text-align:right;padding-right:2px;overflow:hidden">24,76</div>
<div class="t" style="left:476px;top:571px;width:63px;text-align:right;padding-right:2px;overflow:hidden">4284</div>
<div class="t" style="left:540px;top:571px;width:63px;text-align:right;padding-right:2px;overflow:hidden">34,8</div>
<div class="t" style="left:604px;top:571px;width:63px;text-align:right;padding-right:2px;overflow:hidden">37</div>
<div class="t" style="left:668px;top:571px;width:63px;text-align:right;padding-right:2px;overflow:hidden">39,8</div>
<div class="t" style="left:732px;top:571px;width:63px;text-align:right;padding-right:2px;overflow:hidden">23,98</div>
<div class="t" style="left:796px;top:571px;width:63px;text-align:right;padding-right:2px;overflow:hidden">4242</div>
<div class="t" style="left:860px;top:571px;width:63px;text-align:right;padding-right:2px;overflow:hidden">1907,4</div>
<div class="t" style="left:924px;top:571px;width:63px;text-align:right;padding-right:2px;overflow:hidden">1907,4</div>
<div class="t" style="left:988px;top:571px;width:63px;text-align:right;padding-right:2px;overflow:hidden">51,8</div>
<div class="t" style="left:92px;top:588px;width:63px;text-align:right;padding-right:2px;overflow:hidden">25,56</div>
<div class="t" style="left:156px;top:588px;width:63px;text-align:right;padding-right:2px;overflow:hidden">4263</div>
<div class="t" style="left:220px;top:588px;width:63px;text-align:right;padding-right:2px;overflow:hidden">850</div>
<div class="t" style="left:284px;top:588px;width:63px;text-align:right;padding-right:2px;overflow:hidden">505</div>
<div class="t" style="left:348px;top:588px;width:63px;text-align:right;padding-right:2px;overflow:hidden">4,8</div>
<div class="t" style="left:412px;top:588px;width:63px;text-align:right;padding-right:2px;overflow:hidden">25,98</div>
<div class="t" style="left:476px;top:588px;width:63px;text-align:right;padding-right:2px;overflow:hidden">4221</div>
<div class="t" style="left:540px;top:588px;width:63px;text-align:right;padding-right:2px;overflow:hidden">0</div>
<div class="t" style="left:604px;top:588px;width:63px;text-align:right;padding-right:2px;overflow:hidden">38</div>
<div class="t" style="left:668px;top:588px;width:63px;text-align:right;padding-right:2px;overflow:hidden">15,4</div>
<div class="t" style="left:732px;top:588px;width:63px;text-align:right;padding-right:2px;overflow:hidden">25,16</div>
<div class="t" style="left:796px;top:588px;width:63px;text-align:right;padding-right:2px;overflow:hidden">4305</div>
<div class="t" style="left:860px;top:588px;width:63px;text-align:right;padding-right:2px;overflow:hidden">1601,4</div>
<div class="t" style="left:924px;top:588px;width:63px;text-align:right;padding-right:2px;overflow:hidden">1693,2</div>
<div class="t" style="left:988px;top:588px;width:63px;text-align:right;padding-right:2px;overflow:hidden">53</div>
<div class="t" style="left:92px;top:605px;width:63px;text-align:right;padding-right:2px;overflow:hidden">26,78</div>
<div class="t" style="left:156px;top:605px;width:63px;text-align:right;padding-right:2px;overflow:hidden">4074</div>
<div class="t" style="left:220px;top:605px;width:63px;text-align:right;padding-right:2px;overflow:hidden">850</div>
<div class="t" style="left:284px;top:605px;width:63px;text-align:right;padding-right:2px;overflow:hidden">410</div>
<div class="t" style="left:348px;top:605px;width:63px;text-align:right;padding-right:2px;overflow:hidden">4,8</div>
<div class="t" style="left:412px;top:605px;width:63px;text-align:right;padding-right:2px;overflow:hidden">27,18</div>
<div class="t" style="left:476px;top:605px;width:63px;text-align:right;padding-right:2px;overflow:hidden">3969</div>
<div class="t" style="left:540px;top:605px;width:63px;text-align:right;padding-right:2px;overflow:hidden">0</div>
<div class="t" style="left:604px;top:605px;width:63px;text-align:right;padding-right:2px;overflow:hidden">38,4</div>
<div class="t" style="left:668px;top:605px;width:63px;text-align:right;padding-right:2px;overflow:hidden">14,8</div>
<div class="t" style="left:732px;top:605px;width:63px;text-align:right;padding-right:2px;overflow:hidden">26,38</div>
<div class="t" style="left:796px;top:605px;width:63px;text-align:right;padding-right:2px;overflow:hidden">4116</div>
<div class="t" style="left:860px;top:605px;width:63px;text-align:right;padding-right:2px;overflow:hidden">1040,4</div>
<div class="t" style="left:924px;top:605px;width:63px;text-align:right;padding-right:2px;overflow:hidden">989,4</div>
<div class="t" style="left:988px;top:605px;width:63px;text-align:right;padding-right:2px;overflow:hidden">59,8</div>
<div class="a" style="left:1422px;top:94px;width:18px;height:739px;background:#ECE9D8"></div><div class="a" style="left:1438px;top:94px;width:2px;height:755px;background:#ECE9D8"></div><div class="a" style="left:1422px;top:99px;width:16px;height:1px;background:#000"></div><div class="a" style="left:1422px;top:101px;width:16px;height:16px;background:#ECE9D8;border-top:1px solid #fff;border-left:1px solid #fff;border-right:1px solid #716F64;border-bottom:1px solid #716F64;box-shadow:inset -1px -1px 0 #ACA899"></div><svg class="a" style="left:1427px;top:106px" width="8" height="5"><path d="M0 4h7l-3.5-4z" fill="#000"/></svg><div class="a" style="left:1422px;top:117px;width:16px;height:682px;background:#ECE9D8;border-top:1px solid #fff;border-left:1px solid #fff;border-right:1px solid #716F64;border-bottom:1px solid #716F64;box-shadow:inset -1px -1px 0 #ACA899"></div><div class="a" style="left:1422px;top:799px;width:16px;height:18px;background-color:#fff;background-image:repeating-conic-gradient(#000 0 25%,#fff 0 50%);background-size:2px 2px"></div><div class="a" style="left:1422px;top:817px;width:16px;height:16px;background:#ECE9D8;border-top:1px solid #fff;border-left:1px solid #fff;border-right:1px solid #716F64;border-bottom:1px solid #716F64;box-shadow:inset -1px -1px 0 #ACA899"></div><svg class="a" style="left:1427px;top:824px" width="8" height="5"><path d="M0 0h7l-3.5 4z" fill="#000"/></svg>
<div class="a" style="left:0;top:833px;width:1422px;height:16px;background:#ECE9D8"></div><div class="a" style="left:0;top:833px;width:1px;height:16px;background:#ACA899"></div><div class="a" style="left:2px;top:833px;width:16px;height:15px;background:#ECE9D8;border-top:1px solid #ACA899;border-left:1px solid #fff;border-right:1px solid #ACA899;border-bottom:1px solid #ACA899"></div><div class="a" style="left:18px;top:833px;width:16px;height:15px;background:#ECE9D8;border-top:1px solid #ACA899;border-left:1px solid #fff;border-right:1px solid #ACA899;border-bottom:1px solid #ACA899"></div><div class="a" style="left:34px;top:833px;width:16px;height:15px;background:#ECE9D8;border-top:1px solid #ACA899;border-left:1px solid #fff;border-right:1px solid #ACA899;border-bottom:1px solid #ACA899"></div><div class="a" style="left:50px;top:833px;width:16px;height:15px;background:#ECE9D8;border-top:1px solid #ACA899;border-left:1px solid #fff;border-right:1px solid #ACA899;border-bottom:1px solid #ACA899"></div><svg class="a" style="left:0px;top:833px" width="68" height="16" viewBox="0 0 68 16"><rect x="5" y="3" width="1" height="10" fill="#000"/><path d="M12 3v10l-5.5-5z" fill="#000"/><path d="M28.5 3v10l-5.5-5z" fill="#000"/><path d="M39 3v10l5.5-5z" fill="#000"/><path d="M55 3v10l5.5-5z" fill="#000"/><rect x="61" y="3" width="1" height="10" fill="#000"/></svg><svg class="a" style="left:64px;top:833px" width="160" height="16" viewBox="0 0 160 16"><path d="M1.5 0L9.5 15.5H146.5L155 0Z" fill="#fff"/><path d="M1.5 0L9.5 15.5H146.5L155 0" fill="none" stroke="#000" stroke-width="1"/></svg><div class="a" style="left:75px;top:835px;font-size:12.5px;font-weight:bold;line-height:14px;letter-spacing:0.85px;white-space:nowrap">LOG-01-003-008-011</div><div class="a" style="left:220px;top:833px;width:634px;height:1px;background:#ACA899"></div><div class="a" style="left:855px;top:834px;width:1px;height:14px;background:#fff"></div><div class="a" style="left:855px;top:848px;width:4px;height:1px;background:#ACA899"></div><div class="a" style="left:859px;top:833px;width:1px;height:16px;background:#000"></div><div class="a" style="left:860px;top:833px;width:16px;height:16px;background:#ECE9D8;border-top:1px solid #fff;border-left:1px solid #fff;border-right:1px solid #716F64;border-bottom:1px solid #716F64;box-shadow:inset -1px -1px 0 #ACA899"></div><svg class="a" style="left:865px;top:838px" width="5" height="8"><path d="M4 0v7l-4-3.5z" fill="#000"/></svg><div class="a" style="left:876px;top:833px;width:498px;height:16px;background:#ECE9D8;border-top:1px solid #fff;border-left:1px solid #fff;border-right:1px solid #716F64;border-bottom:1px solid #716F64;box-shadow:inset -1px -1px 0 #ACA899"></div><div class="a" style="left:1374px;top:833px;width:27px;height:16px;background-color:#fff;background-image:repeating-conic-gradient(#000 0 25%,#fff 0 50%);background-size:2px 2px"></div><div class="a" style="left:1401px;top:833px;width:16px;height:16px;background:#ECE9D8;border-top:1px solid #fff;border-left:1px solid #fff;border-right:1px solid #716F64;border-bottom:1px solid #716F64;box-shadow:inset -1px -1px 0 #ACA899"></div><svg class="a" style="left:1407px;top:838px" width="5" height="8"><path d="M0 0v7l4-3.5z" fill="#000"/></svg><div class="a" style="left:1417px;top:833px;width:5px;height:16px;background:#ECE9D8;border-left:1px solid #ECE9D8;border-bottom:1px solid #ACA899"><div class="a" style="left:0;top:1px;width:1px;height:14px;background:#fff"></div></div><div class="a" style="left:1422px;top:834px;width:1px;height:15px;background:#000"></div><div class="a" style="left:1422px;top:833px;width:16px;height:1px;background:#716F64"></div>
<div class="a" style="left:0;top:850px;width:1440px;height:1px;background:#fff"></div><div class="a" style="left:0;top:851px;width:1440px;height:19px;background:#ECE9D8"></div><div class="a" style="left:6px;top:855px;font-size:12px;line-height:14px;white-space:nowrap">Gotowy</div><div class="a" style="left:1070px;top:852px;width:2px;height:18px;border-left:1px solid #ACA899;border-right:1px solid #fff"></div><div class="a" style="left:1078px;top:854px;width:34px;height:15px;border-top:1px solid #ACA899;border-left:1px solid #ACA899;border-right:1px solid #fff;border-bottom:1px solid #fff"></div><div class="a" style="left:1113px;top:854px;width:131px;height:15px;border-top:1px solid #ACA899;border-left:1px solid #ACA899;border-right:1px solid #fff;border-bottom:1px solid #fff"></div><div class="a" style="left:1246px;top:854px;width:28px;height:15px;border-top:1px solid #ACA899;border-left:1px solid #ACA899;border-right:1px solid #fff;border-bottom:1px solid #fff"></div><div class="a" style="left:1276px;top:854px;width:35px;height:15px;border-top:1px solid #ACA899;border-left:1px solid #ACA899;border-right:1px solid #fff;border-bottom:1px solid #fff"></div><div class="a" style="left:1313px;top:854px;width:30px;height:15px;border-top:1px solid #ACA899;border-left:1px solid #ACA899;border-right:1px solid #fff;border-bottom:1px solid #fff"></div><div class="a" style="left:1345px;top:854px;width:34px;height:15px;border-top:1px solid #ACA899;border-left:1px solid #ACA899;border-right:1px solid #fff;border-bottom:1px solid #fff"></div><div class="a" style="left:1381px;top:854px;width:29px;height:15px;border-top:1px solid #ACA899;border-left:1px solid #ACA899;border-right:1px solid #fff;border-bottom:1px solid #fff"></div><div class="a" style="left:1412px;top:854px;width:23px;height:15px;border-top:1px solid #ACA899;border-left:1px solid #ACA899;border-right:1px solid #fff;border-bottom:1px solid #fff"></div><div class="a" style="left:1314px;top:855px;font-size:12px;line-height:14px;transform:scaleX(0.94);transform-origin:0 0">NUM</div>
<div class="a" style="left:0;top:870px;width:1440px;height:30px;background:linear-gradient(to bottom,#2A5FD6 0,#4990E6 2px,#3C81E8 3px,#2157D7 6px,#2663E0 14px,#245EDB 27px,#1D48B8 29px,#1941A5 30px)"></div><div class="a" style="left:0;top:870px;width:98px;height:30px;border-radius:0 12px 12px 0;background:linear-gradient(to bottom,#3C9E3C 0,#6CBF6C 3px,#3FA23F 8px,#379937 20px,#2D8A2D 26px,#2A6E2A 30px)"></div><svg class="a" style="left:10px;top:876px" width="20" height="18" viewBox="0 0 20 18"><path d="M3 1c2-1 4-1 6 0l-1.2 7c-2-1-4-1-6 0z" fill="#F26522"/><path d="M10 1.2c2 1 4 1.2 6 0.5l-1.2 7c-2 0.7-4 0.5-6-0.5z" fill="#8DC63F"/><path d="M1.6 9c2-1 4-1 6 0l-1.2 7c-2-1-4-1-6 0z" fill="#3A9BE0"/><path d="M8.6 9.2c2 1 4 1.2 6 0.5l-1.2 7c-2 0.7-4 0.5-6-0.5z" fill="#FFD700"/></svg><div class="a" style="left:35px;top:874px;font-size:18px;font-weight:bold;font-style:italic;color:#fff;line-height:22px;white-space:nowrap;text-shadow:1px 1px 1px #1C4F1C;transform:scaleX(0.93);transform-origin:0 0">Start</div><div class="a" style="left:109px;top:873px;width:159px;height:25px;border-radius:3px;background:#3C81F3;border-top:1px solid #5A95F7;border-left:1px solid #4F8CF6;border-right:1px solid #1F4FC0;border-bottom:1px solid #1F4FC0"></div><svg class="a" style="left:118px;top:877px" width="17" height="17" viewBox="0 0 17 17"><circle cx="9" cy="7.5" r="6.5" fill="#3060C0"/><path d="M6 4c2-1 5 0 6 2c-1 1-3 0-4 1c-1 1 0 3-2 3z" fill="#6AA0E8"/><path d="M3 3c1 1 1 2 1 3c1-2 3-3 4-3c-2 1-3 3-3 5c0 3 3 5 6 5c2 0 4-1 5-3c0 4-4 6-7 6c-5 0-8-4-8-8c0-2 1-4 2-5z" fill="#E8761C" stroke="#A04010" stroke-width=".6"/><path d="M3 9c1 3 4 5 7 5" fill="none" stroke="#F8B040" stroke-width="1.2"/></svg><div class="a" style="left:137px;top:878px;font-size:11.2px;color:#fff;line-height:14px;white-space:nowrap">logil.jpg - Rozmiar ory...</div><div class="a" style="left:269px;top:873px;width:159px;height:25px;border-radius:3px;background:#3C81F3;border-top:1px solid #5A95F7;border-left:1px solid #4F8CF6;border-right:1px solid #1F4FC0;border-bottom:1px solid #1F4FC0"></div><svg class="a" style="left:278px;top:877px" width="17" height="17" viewBox="0 0 17 17"><circle cx="8.5" cy="8.5" r="7.5" fill="#2C5AA8"/><path d="M2 6c3-4 10-5 13 0c-2 0-3 1-4 1c-2-1-5-1-9-1z" fill="#8AB4E8"/><path d="M3 8h11l-1 6h-9z" fill="#F0E0B0" stroke="#806020" stroke-width=".6"/><path d="M3 8l5.5 3.5l5.5-3.5" fill="none" stroke="#806020" stroke-width=".7"/></svg><div class="a" style="left:297px;top:878px;font-size:11.2px;color:#fff;line-height:14px;white-space:nowrap">Odebrane - Thunderbird</div><div class="a" style="left:429px;top:873px;width:159px;height:25px;border-radius:3px;background:#3C81F3;border-top:1px solid #5A95F7;border-left:1px solid #4F8CF6;border-right:1px solid #1F4FC0;border-bottom:1px solid #1F4FC0"></div><svg class="a" style="left:437px;top:877px" width="16" height="16" viewBox="0 0 16 16"><path d="M1 3h5l1 1h7v10H1z" fill="#E8B94A" stroke="#A87A1A" stroke-width=".8"/><path d="M1 6h14v8H1z" fill="#F7D67A"/></svg><div class="a" style="left:457px;top:878px;font-size:11.2px;color:#fff;line-height:14px;white-space:nowrap">Logs</div><div class="a" style="left:589px;top:873px;width:159px;height:25px;border-radius:3px;background:#3C81F3;border-top:1px solid #5A95F7;border-left:1px solid #4F8CF6;border-right:1px solid #1F4FC0;border-bottom:1px solid #1F4FC0"></div><svg class="a" style="left:598px;top:877px" width="16" height="16" viewBox="0 0 16 16" shape-rendering="crispEdges"><rect x="0" y="0" width="16" height="16" fill="url(#dith)"/><rect x="2" y="2" width="12" height="12" fill="#fff"/><path d="M3 4l2-1l3 3l3-3l3 1l-4 4.5l4 4.5h-3l-3-3l-3 3l-2-1l3-3.5z" fill="url(#dith2)"/><path d="M4 5l7.5 7.5" stroke="#fff" stroke-width="0.8" shape-rendering="geometricPrecision"/><rect x="13" y="12" width="2" height="1" fill="#008000"/></svg><div class="a" style="left:617px;top:878px;font-size:11.2px;color:#fff;line-height:14px;white-space:nowrap"><span style="letter-spacing:-0.2px">Microsoft Excel - LOG...</span></div><div class="a" style="left:1329px;top:870px;width:111px;height:30px;background:linear-gradient(to bottom,#1290E8 0,#19B9F3 2px,#0F9BEA 6px,#0C94E6 22px,#0B77D2 30px);border-left:1px solid #1042AF"></div><svg class="a" style="left:1320px;top:876px" width="19" height="19" viewBox="0 0 19 19"><defs><linearGradient id="cg" x1="0" y1="0" x2="1" y2="1"><stop offset="0" stop-color="#8CC4FA"/><stop offset="1" stop-color="#2A7BE6"/></linearGradient></defs><circle cx="9.5" cy="9.5" r="8.8" fill="url(#cg)" stroke="#B8D4F8" stroke-width="1"/><path d="M11 5l-4.5 4.5l4.5 4.5" fill="none" stroke="#fff" stroke-width="2.4"/></svg><svg class="a" style="left:1340px;top:876px" width="56" height="18" viewBox="0 0 56 18"><path d="M3 16c-2-3-3-7-2-10c1 0 2 2 2 4c0-3 0-7 2-8c1 1 1 4 1 6c0-3 1-7 3-7c1 1 0 5 0 7c1-2 2-5 4-5c0 2-1 5-1 7c1-1 2-2 3-1c-1 3-3 8-7 9z" fill="#E0B07A" stroke="#6A4A20" stroke-width=".8"/><text x="6" y="16" font-family="Liberation Serif" font-weight="bold" font-size="9" fill="#107010">F</text><text x="17.5" y="16.5" font-family="Liberation Serif" font-weight="bold" font-size="16" fill="#00E000" stroke="#000" stroke-width=".5">K</text><path d="M25 2c2-1 4 0 4 2c0 2-3 2-3 4c0 2 2 2 3 1" fill="none" stroke="#20D0F0" stroke-width="1.3"/><path d="M28 11v6 M25 14h6" stroke="#E00000" stroke-width="1.3"/><rect x="37" y="4" width="9" height="8" fill="#3A3A60" stroke="#A0A8C0" stroke-width=".8"/><rect x="38" y="12" width="7" height="3" fill="#D0D8E8"/><path d="M48 5c1 1.5 1 4 0 5.5 M50.5 3c2 2.5 2 7.5 0 10 M53 1.5c2.5 3.5 2.5 10 0 13" fill="none" stroke="#E8E8F0" stroke-width=".9"/></svg><div class="a" style="left:1399px;top:878px;font-size:11px;color:#fff;line-height:14px">16:23</div>
<svg class="a" style="left:1222px;top:796px" width="14" height="22" viewBox="0 0 14 22"><path d="M0.5 0.5v16l3.8-3.8l3.4 7.4l2.5-1.1l-3.3-7h5.2z" fill="#fff" stroke="#000" stroke-width="1"/></svg>
</body></html>
